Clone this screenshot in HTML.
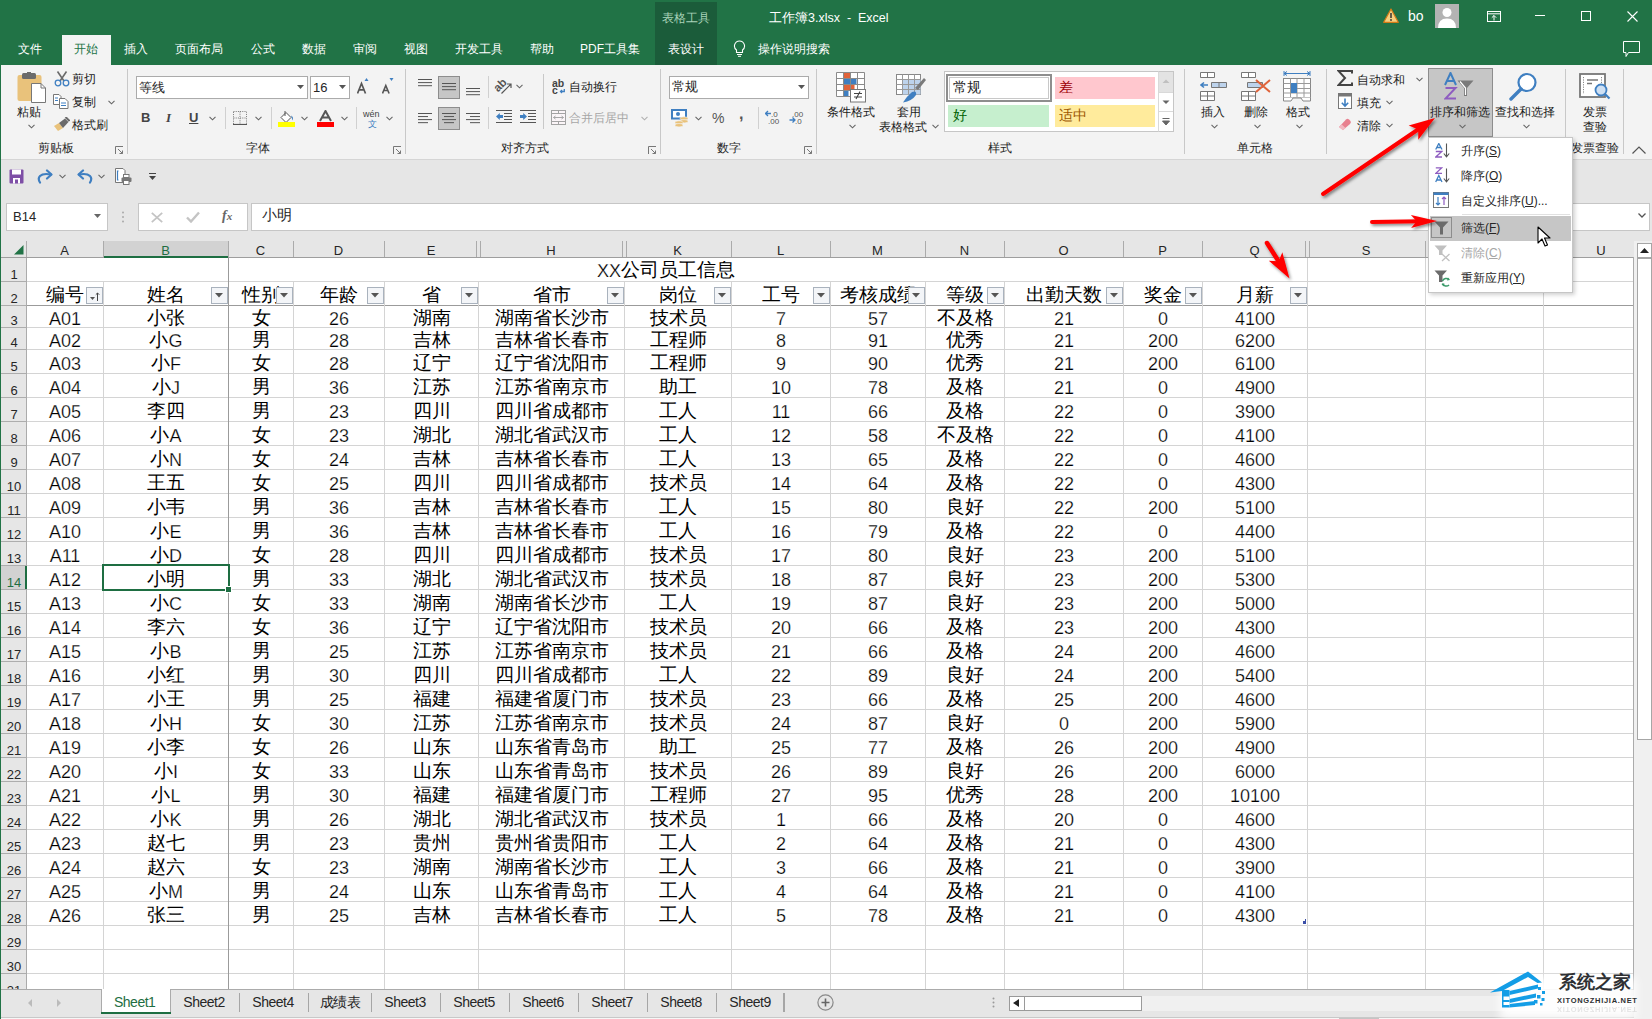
<!DOCTYPE html><html><head><meta charset="utf-8"><style>
*{margin:0;padding:0;box-sizing:border-box}
html,body{width:1652px;height:1019px;overflow:hidden;background:#fff;font-family:"Liberation Sans",sans-serif;}
div,svg{position:absolute}
.t{white-space:nowrap;line-height:14px;font-size:12px;color:#262626}
.g{white-space:nowrap;font-size:18px;line-height:20px;color:#000;text-align:center;overflow:hidden;-webkit-text-stroke:0.25px #fff}
.c{font-size:18.7px;position:relative;top:-1px;-webkit-text-stroke:0}
</style></head><body><div style="left:0px;top:0px;width:1652px;height:65px;background:#217346"></div>
<div style="left:655px;top:2px;width:62px;height:63px;background:#1b5c3a"></div>
<div class="t" style="left:586.0px;top:11px;width:200px;text-align:center;color:#a9d3b9;font-size:12px">表格工具</div>
<div class="t" style="left:769px;top:11px;color:#fff;font-size:12.5px">工作簿3.xlsx&nbsp; - &nbsp;Excel</div>
<div style="left:62px;top:35px;width:49px;height:30px;background:#f3f3f3"></div>
<div class="t" style="left:-70.0px;top:42px;width:200px;text-align:center;color:#fff;font-size:12px">文件</div>
<div class="t" style="left:-14.0px;top:42px;width:200px;text-align:center;color:#217346;font-size:12px">开始</div>
<div class="t" style="left:36.0px;top:42px;width:200px;text-align:center;color:#fff;font-size:12px">插入</div>
<div class="t" style="left:99.0px;top:42px;width:200px;text-align:center;color:#fff;font-size:12px">页面布局</div>
<div class="t" style="left:163.0px;top:42px;width:200px;text-align:center;color:#fff;font-size:12px">公式</div>
<div class="t" style="left:214.0px;top:42px;width:200px;text-align:center;color:#fff;font-size:12px">数据</div>
<div class="t" style="left:265.0px;top:42px;width:200px;text-align:center;color:#fff;font-size:12px">审阅</div>
<div class="t" style="left:316.0px;top:42px;width:200px;text-align:center;color:#fff;font-size:12px">视图</div>
<div class="t" style="left:379.0px;top:42px;width:200px;text-align:center;color:#fff;font-size:12px">开发工具</div>
<div class="t" style="left:442.0px;top:42px;width:200px;text-align:center;color:#fff;font-size:12px">帮助</div>
<div class="t" style="left:510.0px;top:42px;width:200px;text-align:center;color:#fff;font-size:12px">PDF工具集</div>
<div class="t" style="left:586.0px;top:42px;width:200px;text-align:center;color:#fff;font-size:12px">表设计</div>
<div class="t" style="left:758px;top:42px;color:#fff;font-size:12px">操作说明搜索</div>
<div style="left:1px;top:65px;width:1651px;height:95px;background:#f3f3f3;border-bottom:1px solid #d5d5d5"></div>
<svg style="left:17px;top:72px;" width="30" height="32" viewBox="0 0 30 32"><rect x="0.5" y="3" width="24" height="26" rx="2" fill="#e9c27b"/><rect x="5" y="1" width="14" height="6" rx="1.5" fill="#6b6b6b"/><rect x="10" y="0" width="4" height="3" fill="#6b6b6b"/><path d="M14.5 11.5 H24 L28.5 16 V30.5 H14.5 Z" fill="#fff" stroke="#777" stroke-width="1"/><path d="M24 11.5 V16 H28.5" fill="none" stroke="#777" stroke-width="1"/></svg>
<div class="t" style="left:17px;top:105px;font-size:12px;color:#1a1a1a">粘贴</div>
<svg style="left:28px;top:124px;" width="7" height="5" viewBox="0 0 7 5"><path d="M0.5 0.8 L3.5 3.8 L6.5 0.8" stroke="#666" stroke-width="1.1" fill="none"/></svg>
<svg style="left:54px;top:71px;" width="16" height="16" viewBox="0 0 16 16"><path d="M3.5 0.5 L10 10 M12.5 0.5 L6 10" stroke="#6b6b6b" stroke-width="1.6"/><circle cx="4" cy="12" r="2.8" fill="none" stroke="#3f7fc1" stroke-width="1.3"/><circle cx="12" cy="12" r="2.8" fill="none" stroke="#3f7fc1" stroke-width="1.3"/></svg>
<div class="t" style="left:72px;top:72px;font-size:12px;color:#1a1a1a">剪切</div>
<svg style="left:53px;top:94px;" width="16" height="15" viewBox="0 0 16 15"><path d="M0.5 0.5 H6 L8 2.5 V10.5 H0.5 Z" fill="#fff" stroke="#777"/><path d="M6.5 4.5 H12 L15 7.5 V14.5 H6.5 Z" fill="#fff" stroke="#777"/><path d="M2 4 H5 M2 6.5 H5 M8 9 H13 M8 11.5 H13" stroke="#3f7fc1" stroke-width="1"/></svg>
<div class="t" style="left:72px;top:95px;font-size:12px;color:#1a1a1a">复制</div>
<svg style="left:108px;top:100px;" width="7" height="5" viewBox="0 0 7 5"><path d="M0.5 0.8 L3.5 3.8 L6.5 0.8" stroke="#666" stroke-width="1.1" fill="none"/></svg>
<svg style="left:53px;top:117px;" width="17" height="15" viewBox="0 0 17 15"><path d="M1 9 L6 6 L10 11 L5 14 Z" fill="#e9c27b"/><path d="M6 6 L12 1.5 L15.5 5 L10 11 Z" fill="#6b6b6b"/><path d="M12.5 0 L16.5 4" stroke="#6b6b6b" stroke-width="2"/></svg>
<div class="t" style="left:72px;top:118px;font-size:12px;color:#1a1a1a">格式刷</div>
<div class="t" style="left:-44.0px;top:141px;width:200px;text-align:center;font-size:12px;color:#262626">剪贴板</div>
<svg style="left:115px;top:146px;" width="9" height="9" viewBox="0 0 9 9"><path d="M0.5 8 V0.5 H8" stroke="#777" stroke-width="1" fill="none"/><path d="M3 3 L7.5 7.5 M4.5 7.5 H7.5 V4.5" stroke="#777" stroke-width="1" fill="none"/></svg>
<div style="left:127px;top:69px;width:1px;height:85px;background:#c8c8c8"></div>
<div style="left:136px;top:76px;width:172px;height:23px;background:#fff;border:1px solid #ababab"></div>
<div class="t" style="left:139px;top:81px;font-size:13px;color:#262626">等线</div>
<svg style="left:297px;top:85px;" width="7" height="4" viewBox="0 0 7 4"><path d="M0 0 H7 L3.5 4 Z" fill="#555"/></svg>
<div style="left:310px;top:76px;width:40px;height:23px;background:#fff;border:1px solid #ababab"></div>
<div class="t" style="left:313px;top:81px;font-size:13px;color:#262626">16</div>
<svg style="left:339px;top:85px;" width="7" height="4" viewBox="0 0 7 4"><path d="M0 0 H7 L3.5 4 Z" fill="#555"/></svg>
<svg style="left:357px;top:77px;" width="12" height="17" viewBox="0 0 12 17"><path d="M0.5 16.5 L4.5 6.5 L8.5 16.5 M2 12.8 H7" stroke="#555" stroke-width="1.7" fill="none"/><path d="M7.5 4 L9.5 1 L11.5 4 Z" fill="#3f7fc1"/></svg>
<svg style="left:382px;top:77px;" width="12" height="17" viewBox="0 0 12 17"><path d="M0.5 16.5 L3.8 8.5 L7.1 16.5 M1.8 13.5 H5.8" stroke="#555" stroke-width="1.6" fill="none"/><path d="M7.5 1 H11.5 L9.5 4 Z" fill="#3f7fc1"/></svg>
<div class="t" style="left:141px;top:110px;font-size:13px;line-height:16px;font-weight:bold;color:#444">B</div>
<div class="t" style="left:166px;top:110px;font-size:13px;line-height:16px;font-style:italic;font-family:'Liberation Serif',serif;font-weight:bold;color:#444">I</div>
<div class="t" style="left:189px;top:110px;font-size:13px;line-height:16px;font-weight:bold;color:#444;text-decoration:underline">U</div>
<svg style="left:209px;top:116px;" width="7" height="5" viewBox="0 0 7 5"><path d="M0.5 0.8 L3.5 3.8 L6.5 0.8" stroke="#666" stroke-width="1.1" fill="none"/></svg>
<div style="left:225px;top:107px;width:1px;height:22px;background:#d0d0d0"></div>
<svg style="left:233px;top:111px;" width="14" height="14" viewBox="0 0 14 14"><path d="M0.5 0.5 H13.5 V13.5 H0.5 Z M7 0.5 V13.5 M0.5 7 H13.5" stroke="#777" stroke-width="1" stroke-dasharray="1 1.2" fill="none"/><path d="M0 13.5 H14" stroke="#555" stroke-width="1.2"/></svg>
<svg style="left:255px;top:116px;" width="7" height="5" viewBox="0 0 7 5"><path d="M0.5 0.8 L3.5 3.8 L6.5 0.8" stroke="#666" stroke-width="1.1" fill="none"/></svg>
<div style="left:271px;top:107px;width:1px;height:22px;background:#d0d0d0"></div>
<svg style="left:278px;top:110px;" width="17" height="17" viewBox="0 0 17 17"><path d="M3 7.5 L8 2.5 L13 7.5 L8 12.5 Z" fill="#fff" stroke="#555" stroke-width="1"/><path d="M7 1 V6" stroke="#555"/><path d="M13 5.5 Q16 7 14.5 10.5 Z" fill="#3f7fc1"/><rect x="0" y="12" width="17" height="5" fill="#ffff00"/></svg>
<svg style="left:301px;top:116px;" width="7" height="5" viewBox="0 0 7 5"><path d="M0.5 0.8 L3.5 3.8 L6.5 0.8" stroke="#666" stroke-width="1.1" fill="none"/></svg>
<svg style="left:317px;top:110px;" width="17" height="17" viewBox="0 0 17 17"><path d="M3 11 L8.5 1 L14 11 M5 7.5 H12" stroke="#555" stroke-width="2" fill="none"/><rect x="0" y="12" width="17" height="5" fill="#ff0000"/></svg>
<svg style="left:341px;top:116px;" width="7" height="5" viewBox="0 0 7 5"><path d="M0.5 0.8 L3.5 3.8 L6.5 0.8" stroke="#666" stroke-width="1.1" fill="none"/></svg>
<div style="left:356px;top:107px;width:1px;height:22px;background:#d0d0d0"></div>
<div class="t" style="left:363px;top:109px;font-size:9px;line-height:10px;color:#444">wén</div>
<div class="t" style="left:368px;top:119px;font-size:9px;line-height:10px;color:#3f7fc1">文</div>
<svg style="left:386px;top:116px;" width="7" height="5" viewBox="0 0 7 5"><path d="M0.5 0.8 L3.5 3.8 L6.5 0.8" stroke="#666" stroke-width="1.1" fill="none"/></svg>
<div class="t" style="left:158.0px;top:141px;width:200px;text-align:center;font-size:12px;color:#262626">字体</div>
<svg style="left:393px;top:146px;" width="9" height="9" viewBox="0 0 9 9"><path d="M0.5 8 V0.5 H8" stroke="#777" stroke-width="1" fill="none"/><path d="M3 3 L7.5 7.5 M4.5 7.5 H7.5 V4.5" stroke="#777" stroke-width="1" fill="none"/></svg>
<div style="left:405px;top:69px;width:1px;height:85px;background:#c8c8c8"></div>
<svg style="left:418px;top:79px;" width="15" height="11" viewBox="0 0 15 11"><rect x="0" y="0.0" width="14" height="1" fill="#555"/><rect x="0" y="3.0999999999999943" width="14" height="1" fill="#555"/><rect x="0" y="6.200000000000003" width="14" height="1" fill="#555"/></svg>
<div style="left:438px;top:76px;width:22px;height:23px;background:#c6c6c6;border:1px solid #8d8d8d"></div>
<svg style="left:442px;top:83px;" width="15" height="11" viewBox="0 0 15 11"><rect x="0" y="0.0" width="14" height="1" fill="#555"/><rect x="0" y="3.0999999999999943" width="14" height="1" fill="#555"/><rect x="0" y="6.200000000000003" width="14" height="1" fill="#555"/></svg>
<svg style="left:466px;top:88px;" width="15" height="11" viewBox="0 0 15 11"><rect x="0" y="0.0" width="14" height="1" fill="#555"/><rect x="0" y="3.0999999999999943" width="14" height="1" fill="#555"/><rect x="0" y="6.200000000000003" width="14" height="1" fill="#555"/></svg>
<div style="left:488px;top:76px;width:1px;height:22px;background:#d0d0d0"></div>
<svg style="left:494px;top:78px;" width="20" height="17" viewBox="0 0 20 17"><text x="0" y="0" font-size="11.5" font-family="Liberation Sans" font-weight="bold" fill="#555" transform="translate(4,14.5) rotate(-45)">ab</text><path d="M7.5 15.5 L16.5 6.5 M13 6 H17 V10" stroke="#555" stroke-width="1.2" fill="none"/></svg>
<svg style="left:516px;top:84px;" width="7" height="5" viewBox="0 0 7 5"><path d="M0.5 0.8 L3.5 3.8 L6.5 0.8" stroke="#666" stroke-width="1.1" fill="none"/></svg>
<svg style="left:418px;top:113px;" width="15" height="14" viewBox="0 0 15 14"><rect x="0" y="0.0" width="14" height="1" fill="#555"/><rect x="0" y="3.049999999999997" width="10" height="1" fill="#555"/><rect x="0" y="6.099999999999994" width="14" height="1" fill="#555"/><rect x="0" y="9.150000000000006" width="10" height="1" fill="#555"/></svg>
<div style="left:438px;top:107px;width:22px;height:23px;background:#c6c6c6;border:1px solid #8d8d8d"></div>
<svg style="left:442px;top:113px;" width="15" height="14" viewBox="0 0 15 14"><rect x="0.0" y="0.0" width="14" height="1" fill="#555"/><rect x="2.0" y="3.049999999999997" width="10" height="1" fill="#555"/><rect x="0.0" y="6.099999999999994" width="14" height="1" fill="#555"/><rect x="2.0" y="9.150000000000006" width="10" height="1" fill="#555"/></svg>
<svg style="left:466px;top:113px;" width="15" height="14" viewBox="0 0 15 14"><rect x="0" y="0.0" width="14" height="1" fill="#555"/><rect x="4" y="3.049999999999997" width="10" height="1" fill="#555"/><rect x="0" y="6.099999999999994" width="14" height="1" fill="#555"/><rect x="4" y="9.150000000000006" width="10" height="1" fill="#555"/></svg>
<div style="left:488px;top:107px;width:1px;height:22px;background:#d0d0d0"></div>
<svg style="left:496px;top:110px;" width="17" height="14" viewBox="0 0 17 14"><path d="M0 0.5 H16 M8 3.5 H16 M8 6.5 H16 M8 9.5 H16 M0 12.5 H16" stroke="#555" stroke-width="1"/><path d="M0 6.5 L3.8 3 V5 H7 V8 H3.8 V10 Z" fill="#3f7fc1"/></svg>
<svg style="left:520px;top:110px;" width="17" height="14" viewBox="0 0 17 14"><path d="M0 0.5 H16 M8 3.5 H16 M8 6.5 H16 M8 9.5 H16 M0 12.5 H16" stroke="#555" stroke-width="1"/><path d="M7 6.5 L3.2 3 V5 H0 V8 H3.2 V10 Z" fill="#3f7fc1"/></svg>
<div style="left:543px;top:74px;width:1px;height:55px;background:#c8c8c8"></div>
<svg style="left:552px;top:78px;" width="15" height="17" viewBox="0 0 15 17"><text x="0" y="8.5" font-size="10.5" font-family="Liberation Sans" font-weight="bold" fill="#444">ab</text><text x="0" y="16" font-size="10.5" font-family="Liberation Sans" font-weight="bold" fill="#444">c</text><path d="M12.3 11 V13.5 H8.5 M10 12 L8.5 13.5 L10 15" stroke="#3f7fc1" stroke-width="1.3" fill="none"/></svg>
<div class="t" style="left:569px;top:80px;font-size:12px;color:#1a1a1a">自动换行</div>
<svg style="left:551px;top:110px;" width="16" height="15" viewBox="0 0 16 15"><rect x="0.5" y="0.5" width="14" height="14" fill="#fbf5f8" stroke="#a3a3a3"/><path d="M0.5 3.5 H14.5 M0.5 11.5 H14.5 M7.5 0.5 V3.5 M7.5 11.5 V14.5" stroke="#a3a3a3"/><path d="M2.5 7.5 H12.5 M4.5 6 L2.5 7.5 L4.5 9 M10.5 6 L12.5 7.5 L10.5 9" stroke="#a8a8a8" fill="none"/></svg>
<div class="t" style="left:569px;top:111px;font-size:12px;color:#a6a6a6">合并后居中</div>
<svg style="left:641px;top:116px;" width="7" height="5" viewBox="0 0 7 5"><path d="M0.5 0.8 L3.5 3.8 L6.5 0.8" stroke="#b0b0b0" stroke-width="1.1" fill="none"/></svg>
<div class="t" style="left:425.0px;top:141px;width:200px;text-align:center;font-size:12px;color:#262626">对齐方式</div>
<svg style="left:648px;top:146px;" width="9" height="9" viewBox="0 0 9 9"><path d="M0.5 8 V0.5 H8" stroke="#777" stroke-width="1" fill="none"/><path d="M3 3 L7.5 7.5 M4.5 7.5 H7.5 V4.5" stroke="#777" stroke-width="1" fill="none"/></svg>
<div style="left:660px;top:69px;width:1px;height:85px;background:#c8c8c8"></div>
<div style="left:669px;top:76px;width:140px;height:23px;background:#fff;border:1px solid #ababab"></div>
<div class="t" style="left:672px;top:80px;font-size:13px;color:#262626">常规</div>
<svg style="left:798px;top:85px;" width="7" height="4" viewBox="0 0 7 4"><path d="M0 0 H7 L3.5 4 Z" fill="#555"/></svg>
<svg style="left:671px;top:109px;" width="18" height="18" viewBox="0 0 18 18"><rect x="1" y="1" width="14" height="8.5" fill="#fff" stroke="#3f7fc1" stroke-width="2"/><circle cx="7" cy="5" r="2" fill="#3f7fc1"/><ellipse cx="13" cy="9.5" rx="4" ry="1.7" fill="#e9c27b" stroke="#f3f3f3" stroke-width="0.6"/><ellipse cx="13" cy="12.3" rx="4" ry="1.7" fill="#e9c27b" stroke="#f3f3f3" stroke-width="0.6"/><ellipse cx="8" cy="13.5" rx="4" ry="1.7" fill="#e9c27b" stroke="#f3f3f3" stroke-width="0.6"/><ellipse cx="8" cy="16.2" rx="4" ry="1.7" fill="#e9c27b" stroke="#f3f3f3" stroke-width="0.6"/></svg>
<svg style="left:695px;top:116px;" width="7" height="5" viewBox="0 0 7 5"><path d="M0.5 0.8 L3.5 3.8 L6.5 0.8" stroke="#666" stroke-width="1.1" fill="none"/></svg>
<div class="t" style="left:712px;top:110px;font-size:14px;line-height:16px;color:#555">%</div>
<div class="t" style="left:739px;top:106px;font-size:16px;line-height:16px;font-weight:bold;color:#555">,</div>
<div style="left:758px;top:107px;width:1px;height:22px;background:#d0d0d0"></div>
<svg style="left:765px;top:110px;" width="16" height="14" viewBox="0 0 16 14"><text x="6" y="6.5" font-size="8" font-family="Liberation Sans" fill="#555">.0</text><text x="3" y="13.5" font-size="8" font-family="Liberation Sans" fill="#555">.00</text><path d="M0.5 3.5 H6 M3 1 L0.5 3.5 L3 6" stroke="#3f7fc1" stroke-width="1.3" fill="none"/></svg>
<svg style="left:789px;top:110px;" width="16" height="14" viewBox="0 0 16 14"><text x="3" y="6.5" font-size="8" font-family="Liberation Sans" fill="#555">.00</text><text x="6" y="13.5" font-size="8" font-family="Liberation Sans" fill="#555">.0</text><path d="M0.5 10 H6 M3.5 7.5 L6 10 L3.5 12.5" stroke="#3f7fc1" stroke-width="1.3" fill="none"/></svg>
<div class="t" style="left:629.0px;top:141px;width:200px;text-align:center;font-size:12px;color:#262626">数字</div>
<svg style="left:804px;top:146px;" width="9" height="9" viewBox="0 0 9 9"><path d="M0.5 8 V0.5 H8" stroke="#777" stroke-width="1" fill="none"/><path d="M3 3 L7.5 7.5 M4.5 7.5 H7.5 V4.5" stroke="#777" stroke-width="1" fill="none"/></svg>
<div style="left:816px;top:69px;width:1px;height:85px;background:#c8c8c8"></div>
<svg style="left:836px;top:72px;" width="31" height="31" viewBox="0 0 31 31"><rect x="0.5" y="0.5" width="28" height="24" fill="#fff"/><rect x="7.5" y="0.5" width="7" height="6" fill="#e0633a"/><rect x="7.5" y="6.5" width="13" height="6" fill="#3f7fc1"/><rect x="7.5" y="12.5" width="11" height="6" fill="#e0633a"/><rect x="7.5" y="18.5" width="5" height="6" fill="#3f7fc1"/><path d="M0.5 0.5 H28.5 V24.5 H0.5 Z M7.5 0.5 V24.5 M14.5 0.5 V24.5 M21.5 0.5 V24.5 M0.5 6.5 H28.5 M0.5 12.5 H28.5 M0.5 18.5 H28.5" stroke="#8a8a8a" stroke-width="1" fill="none"/><rect x="14.5" y="17.5" width="15" height="12.5" fill="#fff" stroke="#777"/><path d="M18 21.5 H26 M18 25 H26 M24 19.5 L20 27" stroke="#444" stroke-width="1.1"/></svg>
<div class="t" style="left:751.0px;top:105px;width:200px;text-align:center;font-size:12px;color:#1a1a1a">条件格式</div>
<svg style="left:849px;top:124px;" width="7" height="5" viewBox="0 0 7 5"><path d="M0.5 0.8 L3.5 3.8 L6.5 0.8" stroke="#666" stroke-width="1.1" fill="none"/></svg>
<svg style="left:896px;top:74px;" width="31" height="30" viewBox="0 0 31 30"><rect x="0.5" y="0.5" width="24" height="20" fill="#fff" stroke="#888"/><rect x="6.5" y="5.5" width="18" height="15" fill="#bdd3ec"/><path d="M6.5 0.5 V20.5 M12.5 0.5 V20.5 M18.5 0.5 V20.5 M0.5 5.5 H24.5 M0.5 10.5 H24.5 M0.5 15.5 H24.5" stroke="#999"/><path d="M30 6 L22 16 L19 14 L28 4 Z" fill="#7a7a7a"/><path d="M7 28.5 Q11 22 16 18 Q21 16 20 21 Q16 27 7 28.5 Z" fill="#3f7fc1"/></svg>
<div class="t" style="left:809.0px;top:105px;width:200px;text-align:center;font-size:12px;color:#1a1a1a">套用</div>
<div class="t" style="left:803.0px;top:120px;width:200px;text-align:center;font-size:12px;color:#1a1a1a">表格格式</div>
<svg style="left:932px;top:124px;" width="7" height="5" viewBox="0 0 7 5"><path d="M0.5 0.8 L3.5 3.8 L6.5 0.8" stroke="#666" stroke-width="1.1" fill="none"/></svg>
<div style="left:944px;top:71px;width:230px;height:61px;background:#fff;border:1px solid #c6c6c6"></div>
<div style="left:946px;top:74px;width:106px;height:28px;background:#fff;border:2px solid #8e8e8e;box-shadow:inset 0 0 0 1px #fff, inset 0 0 0 2px #c8c8c8"></div>
<div class="t" style="left:953px;top:79px;font-size:14px;line-height:16px;color:#262626">常规</div>
<div style="left:1055px;top:77px;width:100px;height:22px;background:#ffc7ce"></div>
<div class="t" style="left:1059px;top:79px;font-size:14px;line-height:16px;color:#9c0006">差</div>
<div style="left:948px;top:105px;width:101px;height:22px;background:#c6efce"></div>
<div class="t" style="left:953px;top:107px;font-size:14px;line-height:16px;color:#006100">好</div>
<div style="left:1055px;top:105px;width:100px;height:22px;background:#ffeb9c"></div>
<div class="t" style="left:1059px;top:107px;font-size:14px;line-height:16px;color:#9c5700">适中</div>
<div style="left:1158px;top:71px;width:16px;height:61px;background:#fff;border:1px solid #c6c6c6;border-left:1px solid #d9d9d9"></div>
<div style="left:1159px;top:72px;width:14px;height:20px;background:#e3e3e3"></div>
<svg style="left:1162px;top:79px;" width="8" height="5" viewBox="0 0 8 5"><path d="M0.5 4 L4 0.5 L7.5 4 Z" fill="#c0c0c0"/></svg>
<div style="left:1159px;top:92px;width:14px;height:1px;background:#d9d9d9"></div>
<svg style="left:1162px;top:100px;" width="8" height="5" viewBox="0 0 8 5"><path d="M0.5 0.5 H7.5 L4 4 Z" fill="#666"/></svg>
<div style="left:1159px;top:111px;width:14px;height:1px;background:#d9d9d9"></div>
<svg style="left:1162px;top:118px;" width="8" height="8" viewBox="0 0 8 8"><path d="M0.5 0.5 H7.5 M0.5 3 H7.5 L4 7 Z" stroke="#666" stroke-width="1" fill="#666"/></svg>
<div class="t" style="left:900.0px;top:141px;width:200px;text-align:center;font-size:12px;color:#262626">样式</div>
<div style="left:1184px;top:69px;width:1px;height:85px;background:#c8c8c8"></div>
<svg style="left:1200px;top:72px;" width="28" height="29" viewBox="0 0 28 29"><path d="M0.5 0.5 H14.5 V5.5 H0.5 Z M7.5 0.5 V5.5" stroke="#777" fill="#fff"/><path d="M11.5 10.5 H26.5 V15.5 H11.5 Z M19 10.5 V15.5" stroke="#777" fill="#bdd3ec"/><path d="M1 13 H8 M4 10.5 L1 13 L4 15.5" stroke="#3f7fc1" stroke-width="1.6" fill="none"/><path d="M0.5 19.5 H14.5 V28.5 H0.5 Z M7.5 19.5 V28.5 M0.5 24 H14.5" stroke="#777" fill="#fff"/></svg>
<div class="t" style="left:1113.0px;top:105px;width:200px;text-align:center;font-size:12px;color:#1a1a1a">插入</div>
<svg style="left:1211px;top:124px;" width="7" height="5" viewBox="0 0 7 5"><path d="M0.5 0.8 L3.5 3.8 L6.5 0.8" stroke="#666" stroke-width="1.1" fill="none"/></svg>
<svg style="left:1241px;top:72px;" width="31" height="29" viewBox="0 0 31 29"><path d="M0.5 0.5 H14.5 V5.5 H0.5 Z M7.5 0.5 V5.5" stroke="#777" fill="#fff"/><path d="M6.5 10.5 H21.5 V15.5 H6.5 Z" stroke="#777" fill="#bdd3ec"/><path d="M0.5 19.5 H14.5 V28.5 H0.5 Z M7.5 19.5 V28.5 M0.5 24 H14.5" stroke="#777" fill="#fff"/><path d="M15 8 L29 20 M29 8 L15 20" stroke="#e0633a" stroke-width="2"/></svg>
<div class="t" style="left:1156.0px;top:105px;width:200px;text-align:center;font-size:12px;color:#1a1a1a">删除</div>
<svg style="left:1254px;top:124px;" width="7" height="5" viewBox="0 0 7 5"><path d="M0.5 0.8 L3.5 3.8 L6.5 0.8" stroke="#666" stroke-width="1.1" fill="none"/></svg>
<svg style="left:1283px;top:71px;" width="29" height="31" viewBox="0 0 29 31"><path d="M1 2.5 H27 M1 0 V5 M27 0 V5 M4 0.5 L1 2.5 L4 4.5 M24 0.5 L27 2.5 L24 4.5" stroke="#3f7fc1" stroke-width="1" fill="none"/><rect x="0.5" y="7.5" width="27" height="19" fill="#fff" stroke="#888"/><path d="M7.5 7.5 V26.5 M14 7.5 V26.5 M21 7.5 V26.5 M0.5 12.5 H27.5 M0.5 17.5 H27.5 M0.5 22 H27.5" stroke="#999"/><rect x="8" y="12" width="6" height="10" fill="#3f7fc1"/><path d="M0.5 26.5 V30 H8 L10 27 H18 L20 30 H27.5 V26.5" stroke="#888" fill="#fff"/></svg>
<div class="t" style="left:1198.0px;top:105px;width:200px;text-align:center;font-size:12px;color:#1a1a1a">格式</div>
<svg style="left:1296px;top:124px;" width="7" height="5" viewBox="0 0 7 5"><path d="M0.5 0.8 L3.5 3.8 L6.5 0.8" stroke="#666" stroke-width="1.1" fill="none"/></svg>
<div class="t" style="left:1155.0px;top:141px;width:200px;text-align:center;font-size:12px;color:#262626">单元格</div>
<div style="left:1326px;top:69px;width:1px;height:85px;background:#c8c8c8"></div>
<svg style="left:1337px;top:70px;" width="16" height="16" viewBox="0 0 16 16"><path d="M15 3.5 V1 H1.5 L8 8 L1.5 15 H15 V12.5" stroke="#444" stroke-width="2" fill="none" stroke-linejoin="miter"/></svg>
<div class="t" style="left:1357px;top:73px;font-size:12px;color:#1a1a1a">自动求和</div>
<svg style="left:1416px;top:77px;" width="7" height="5" viewBox="0 0 7 5"><path d="M0.5 0.8 L3.5 3.8 L6.5 0.8" stroke="#666" stroke-width="1.1" fill="none"/></svg>
<svg style="left:1338px;top:93px;" width="15" height="17" viewBox="0 0 15 17"><rect x="0.5" y="0.5" width="13" height="15" fill="#fff" stroke="#777"/><rect x="0.5" y="0.5" width="13" height="3" fill="#777"/><path d="M7 5.5 V13 M3.8 9.8 L7 13 L10.2 9.8" stroke="#3f7fc1" stroke-width="1.6" fill="none"/></svg>
<div class="t" style="left:1357px;top:96px;font-size:12px;color:#1a1a1a">填充</div>
<svg style="left:1386px;top:100px;" width="7" height="5" viewBox="0 0 7 5"><path d="M0.5 0.8 L3.5 3.8 L6.5 0.8" stroke="#666" stroke-width="1.1" fill="none"/></svg>
<svg style="left:1338px;top:117px;" width="14" height="14" viewBox="0 0 14 14"><path d="M1 10 L8 2.5 Q9.5 1 11 2.5 L12.5 4 Q13.5 5.5 12 7 L5 13 Z" fill="#e8808f"/><path d="M1 10 L3.5 7.3 L7.5 11 L5 13.2 Z" fill="#f2b8c1"/></svg>
<div class="t" style="left:1357px;top:119px;font-size:12px;color:#1a1a1a">清除</div>
<svg style="left:1386px;top:123px;" width="7" height="5" viewBox="0 0 7 5"><path d="M0.5 0.8 L3.5 3.8 L6.5 0.8" stroke="#666" stroke-width="1.1" fill="none"/></svg>
<div style="left:1428px;top:68px;width:65px;height:69px;background:#c6c6c6;border:1px solid #8d8d8d"></div>
<svg style="left:1444px;top:72px;" width="14" height="29" viewBox="0 0 14 29"><path d="M1 13 L6.5 1 L12 13 M3 9 H10" stroke="#3f7fc1" stroke-width="2" fill="none"/><path d="M1.5 16 H11.5 L1.5 26.5 H12" stroke="#8e5cc0" stroke-width="2" fill="none" stroke-linejoin="miter"/></svg>
<svg style="left:1457px;top:80px;" width="17" height="17" viewBox="0 0 17 17"><path d="M0.5 0.5 H16.5 L10 8 V16 H7 V8 Z" fill="#7a7a7a"/><path d="M3 1.5 L8.5 8 V15" stroke="#fff" stroke-width="1.2" fill="none"/></svg>
<div class="t" style="left:1360.0px;top:105px;width:200px;text-align:center;font-size:12px;color:#1a1a1a">排序和筛选</div>
<svg style="left:1459px;top:124px;" width="7" height="5" viewBox="0 0 7 5"><path d="M0.5 0.8 L3.5 3.8 L6.5 0.8" stroke="#666" stroke-width="1.1" fill="none"/></svg>
<svg style="left:1509px;top:72px;" width="29" height="29" viewBox="0 0 29 29"><circle cx="18" cy="10.5" r="8.5" fill="#fff" stroke="#3f7fc1" stroke-width="2.2"/><path d="M12 17 L2 27" stroke="#3f7fc1" stroke-width="3.4" stroke-linecap="round"/></svg>
<div class="t" style="left:1425.0px;top:105px;width:200px;text-align:center;font-size:12px;color:#1a1a1a">查找和选择</div>
<svg style="left:1523px;top:124px;" width="7" height="5" viewBox="0 0 7 5"><path d="M0.5 0.8 L3.5 3.8 L6.5 0.8" stroke="#666" stroke-width="1.1" fill="none"/></svg>
<div style="left:1565px;top:69px;width:1px;height:85px;background:#c8c8c8"></div>
<svg style="left:1579px;top:73px;" width="32" height="28" viewBox="0 0 32 28"><rect x="1" y="1" width="25" height="23" fill="#fff" stroke="#777" stroke-width="1.8"/><path d="M4.5 4 V21 M22.5 4 V21" stroke="#888" stroke-dasharray="1.2 1.2"/><path d="M8 7 H19 M8 10.5 H13" stroke="#777" stroke-width="1.6"/><circle cx="22" cy="17" r="5.5" fill="#cfe0f3" stroke="#3f7fc1" stroke-width="1.8"/><path d="M26 21 L30.5 25.5" stroke="#3f7fc1" stroke-width="2.2"/></svg>
<div class="t" style="left:1495.0px;top:105px;width:200px;text-align:center;font-size:12px;color:#1a1a1a">发票</div>
<div class="t" style="left:1495.0px;top:120px;width:200px;text-align:center;font-size:12px;color:#1a1a1a">查验</div>
<div class="t" style="left:1495.0px;top:141px;width:200px;text-align:center;font-size:12px;color:#262626">发票查验</div>
<div style="left:1623px;top:69px;width:1px;height:85px;background:#c8c8c8"></div>
<svg style="left:1632px;top:146px;" width="14" height="8" viewBox="0 0 14 8"><path d="M0.5 7.5 L7 1 L13.5 7.5" stroke="#555" stroke-width="1.2" fill="none"/></svg>
<div style="left:1px;top:160px;width:1651px;height:81px;background:#e6e6e6"></div>
<div style="left:6px;top:203px;width:102px;height:28px;background:#fff;border:1px solid #c6c6c6"></div>
<div class="t" style="left:13px;top:210px;font-size:13px;color:#262626">B14</div>
<div style="left:138px;top:203px;width:110px;height:28px;background:#fff;border:1px solid #c6c6c6"></div>
<div style="left:251px;top:203px;width:1399px;height:28px;background:#fff;border:1px solid #c6c6c6"></div>
<div class="t" style="left:262px;top:207px;font-size:14.5px;line-height:16px;color:#262626">小明</div>
<div style="left:1px;top:241px;width:1636px;height:748px;background:#fff"></div>
<div style="left:1px;top:241px;width:1633px;height:16px;background:#e6e6e6"></div>
<div style="left:1px;top:257px;width:25px;height:732px;background:#e6e6e6"></div>
<div style="left:104px;top:241px;width:124px;height:15px;background:#d2d2d2"></div>
<div style="left:1px;top:566px;width:25px;height:23px;background:#d2d2d2"></div>
<div style="left:27px;top:281px;width:1606px;height:1px;background:#d4d4d4"></div>
<div style="left:1px;top:281px;width:25px;height:1px;background:#adadad"></div>
<div style="left:27px;top:305px;width:1606px;height:1px;background:#9b9b9b"></div>
<div style="left:1px;top:305px;width:25px;height:1px;background:#adadad"></div>
<div style="left:27px;top:327px;width:1606px;height:1px;background:#d4d4d4"></div>
<div style="left:1px;top:327px;width:25px;height:1px;background:#adadad"></div>
<div style="left:27px;top:349px;width:1606px;height:1px;background:#d4d4d4"></div>
<div style="left:1px;top:349px;width:25px;height:1px;background:#adadad"></div>
<div style="left:27px;top:373px;width:1606px;height:1px;background:#d4d4d4"></div>
<div style="left:1px;top:373px;width:25px;height:1px;background:#adadad"></div>
<div style="left:27px;top:397px;width:1606px;height:1px;background:#d4d4d4"></div>
<div style="left:1px;top:397px;width:25px;height:1px;background:#adadad"></div>
<div style="left:27px;top:421px;width:1606px;height:1px;background:#d4d4d4"></div>
<div style="left:1px;top:421px;width:25px;height:1px;background:#adadad"></div>
<div style="left:27px;top:445px;width:1606px;height:1px;background:#d4d4d4"></div>
<div style="left:1px;top:445px;width:25px;height:1px;background:#adadad"></div>
<div style="left:27px;top:469px;width:1606px;height:1px;background:#d4d4d4"></div>
<div style="left:1px;top:469px;width:25px;height:1px;background:#adadad"></div>
<div style="left:27px;top:493px;width:1606px;height:1px;background:#d4d4d4"></div>
<div style="left:1px;top:493px;width:25px;height:1px;background:#adadad"></div>
<div style="left:27px;top:517px;width:1606px;height:1px;background:#d4d4d4"></div>
<div style="left:1px;top:517px;width:25px;height:1px;background:#adadad"></div>
<div style="left:27px;top:541px;width:1606px;height:1px;background:#d4d4d4"></div>
<div style="left:1px;top:541px;width:25px;height:1px;background:#adadad"></div>
<div style="left:27px;top:565px;width:1606px;height:1px;background:#d4d4d4"></div>
<div style="left:1px;top:565px;width:25px;height:1px;background:#adadad"></div>
<div style="left:27px;top:589px;width:1606px;height:1px;background:#d4d4d4"></div>
<div style="left:1px;top:589px;width:25px;height:1px;background:#adadad"></div>
<div style="left:27px;top:613px;width:1606px;height:1px;background:#d4d4d4"></div>
<div style="left:1px;top:613px;width:25px;height:1px;background:#adadad"></div>
<div style="left:27px;top:637px;width:1606px;height:1px;background:#d4d4d4"></div>
<div style="left:1px;top:637px;width:25px;height:1px;background:#adadad"></div>
<div style="left:27px;top:661px;width:1606px;height:1px;background:#d4d4d4"></div>
<div style="left:1px;top:661px;width:25px;height:1px;background:#adadad"></div>
<div style="left:27px;top:685px;width:1606px;height:1px;background:#d4d4d4"></div>
<div style="left:1px;top:685px;width:25px;height:1px;background:#adadad"></div>
<div style="left:27px;top:709px;width:1606px;height:1px;background:#d4d4d4"></div>
<div style="left:1px;top:709px;width:25px;height:1px;background:#adadad"></div>
<div style="left:27px;top:733px;width:1606px;height:1px;background:#d4d4d4"></div>
<div style="left:1px;top:733px;width:25px;height:1px;background:#adadad"></div>
<div style="left:27px;top:757px;width:1606px;height:1px;background:#d4d4d4"></div>
<div style="left:1px;top:757px;width:25px;height:1px;background:#adadad"></div>
<div style="left:27px;top:781px;width:1606px;height:1px;background:#d4d4d4"></div>
<div style="left:1px;top:781px;width:25px;height:1px;background:#adadad"></div>
<div style="left:27px;top:805px;width:1606px;height:1px;background:#d4d4d4"></div>
<div style="left:1px;top:805px;width:25px;height:1px;background:#adadad"></div>
<div style="left:27px;top:829px;width:1606px;height:1px;background:#d4d4d4"></div>
<div style="left:1px;top:829px;width:25px;height:1px;background:#adadad"></div>
<div style="left:27px;top:853px;width:1606px;height:1px;background:#d4d4d4"></div>
<div style="left:1px;top:853px;width:25px;height:1px;background:#adadad"></div>
<div style="left:27px;top:877px;width:1606px;height:1px;background:#d4d4d4"></div>
<div style="left:1px;top:877px;width:25px;height:1px;background:#adadad"></div>
<div style="left:27px;top:901px;width:1606px;height:1px;background:#d4d4d4"></div>
<div style="left:1px;top:901px;width:25px;height:1px;background:#adadad"></div>
<div style="left:27px;top:925px;width:1606px;height:1px;background:#d4d4d4"></div>
<div style="left:1px;top:925px;width:25px;height:1px;background:#adadad"></div>
<div style="left:27px;top:949px;width:1606px;height:1px;background:#d4d4d4"></div>
<div style="left:1px;top:949px;width:25px;height:1px;background:#adadad"></div>
<div style="left:27px;top:973px;width:1606px;height:1px;background:#d4d4d4"></div>
<div style="left:1px;top:973px;width:25px;height:1px;background:#adadad"></div>
<div style="left:103px;top:282px;width:1px;height:707px;background:#d4d4d4"></div>
<div style="left:228px;top:258px;width:1px;height:731px;background:#9b9b9b"></div>
<div style="left:293px;top:282px;width:1px;height:707px;background:#d4d4d4"></div>
<div style="left:384px;top:282px;width:1px;height:707px;background:#d4d4d4"></div>
<div style="left:478px;top:282px;width:1px;height:707px;background:#d4d4d4"></div>
<div style="left:624px;top:282px;width:1px;height:707px;background:#d4d4d4"></div>
<div style="left:731px;top:282px;width:1px;height:707px;background:#d4d4d4"></div>
<div style="left:830px;top:282px;width:1px;height:707px;background:#d4d4d4"></div>
<div style="left:925px;top:282px;width:1px;height:707px;background:#d4d4d4"></div>
<div style="left:1004px;top:282px;width:1px;height:707px;background:#d4d4d4"></div>
<div style="left:1123px;top:282px;width:1px;height:707px;background:#d4d4d4"></div>
<div style="left:1202px;top:282px;width:1px;height:707px;background:#d4d4d4"></div>
<div style="left:1307px;top:258px;width:1px;height:731px;background:#d4d4d4"></div>
<div style="left:1425px;top:258px;width:1px;height:731px;background:#d4d4d4"></div>
<div style="left:1543px;top:258px;width:1px;height:731px;background:#d4d4d4"></div>
<div style="left:26px;top:241px;width:1px;height:748px;background:#ababab"></div>
<div style="left:1px;top:257px;width:1633px;height:1px;background:#9e9e9e"></div>
<div style="left:26px;top:241px;width:1px;height:16px;background:#ababab"></div>
<div style="left:103px;top:241px;width:1px;height:16px;background:#ababab"></div>
<div style="left:228px;top:241px;width:1px;height:16px;background:#ababab"></div>
<div style="left:293px;top:241px;width:1px;height:16px;background:#ababab"></div>
<div style="left:384px;top:241px;width:1px;height:16px;background:#ababab"></div>
<div style="left:476px;top:241px;width:1px;height:16px;background:#ababab"></div>
<div style="left:480px;top:241px;width:1px;height:16px;background:#ababab"></div>
<div style="left:622px;top:241px;width:1px;height:16px;background:#ababab"></div>
<div style="left:626px;top:241px;width:1px;height:16px;background:#ababab"></div>
<div style="left:731px;top:241px;width:1px;height:16px;background:#ababab"></div>
<div style="left:830px;top:241px;width:1px;height:16px;background:#ababab"></div>
<div style="left:925px;top:241px;width:1px;height:16px;background:#ababab"></div>
<div style="left:1004px;top:241px;width:1px;height:16px;background:#ababab"></div>
<div style="left:1123px;top:241px;width:1px;height:16px;background:#ababab"></div>
<div style="left:1202px;top:241px;width:1px;height:16px;background:#ababab"></div>
<div style="left:1305px;top:241px;width:1px;height:16px;background:#ababab"></div>
<div style="left:1309px;top:241px;width:1px;height:16px;background:#ababab"></div>
<div style="left:1425px;top:241px;width:1px;height:16px;background:#ababab"></div>
<div style="left:1543px;top:241px;width:1px;height:16px;background:#ababab"></div>
<div style="left:104px;top:256px;width:124px;height:2px;background:#1e6e42"></div>
<div style="left:25px;top:566px;width:2px;height:23px;background:#1e6e42"></div>
<div style="left:1633px;top:257px;width:1px;height:732px;background:#ababab"></div>
<svg style="left:14px;top:245px;" width="10" height="10" viewBox="0 0 10 10"><path d="M9.5 0 V9.5 H0 Z" fill="#217346"/></svg>
<div class="t" style="left:-35.5px;top:244px;width:200px;text-align:center;font-size:13px;color:#262626">A</div>
<div class="t" style="left:65.5px;top:244px;width:200px;text-align:center;font-size:13px;color:#1e6e42">B</div>
<div class="t" style="left:160.5px;top:244px;width:200px;text-align:center;font-size:13px;color:#262626">C</div>
<div class="t" style="left:238.5px;top:244px;width:200px;text-align:center;font-size:13px;color:#262626">D</div>
<div class="t" style="left:331.0px;top:244px;width:200px;text-align:center;font-size:13px;color:#262626">E</div>
<div class="t" style="left:451.0px;top:244px;width:200px;text-align:center;font-size:13px;color:#262626">H</div>
<div class="t" style="left:577.5px;top:244px;width:200px;text-align:center;font-size:13px;color:#262626">K</div>
<div class="t" style="left:680.5px;top:244px;width:200px;text-align:center;font-size:13px;color:#262626">L</div>
<div class="t" style="left:777.5px;top:244px;width:200px;text-align:center;font-size:13px;color:#262626">M</div>
<div class="t" style="left:864.5px;top:244px;width:200px;text-align:center;font-size:13px;color:#262626">N</div>
<div class="t" style="left:963.5px;top:244px;width:200px;text-align:center;font-size:13px;color:#262626">O</div>
<div class="t" style="left:1062.5px;top:244px;width:200px;text-align:center;font-size:13px;color:#262626">P</div>
<div class="t" style="left:1154.5px;top:244px;width:200px;text-align:center;font-size:13px;color:#262626">Q</div>
<div class="t" style="left:1266.0px;top:244px;width:200px;text-align:center;font-size:13px;color:#262626">S</div>
<div class="t" style="left:1384.0px;top:244px;width:200px;text-align:center;font-size:13px;color:#262626">T</div>
<div class="t" style="left:1501.0px;top:244px;width:200px;text-align:center;font-size:13px;color:#262626">U</div>
<div class="t" style="left:2px;top:267.5px;width:24px;text-align:center;font-size:13px;color:#262626">1</div>
<div class="t" style="left:2px;top:291.5px;width:24px;text-align:center;font-size:13px;color:#262626">2</div>
<div class="t" style="left:2px;top:313.5px;width:24px;text-align:center;font-size:13px;color:#262626">3</div>
<div class="t" style="left:2px;top:335.5px;width:24px;text-align:center;font-size:13px;color:#262626">4</div>
<div class="t" style="left:2px;top:359.5px;width:24px;text-align:center;font-size:13px;color:#262626">5</div>
<div class="t" style="left:2px;top:383.5px;width:24px;text-align:center;font-size:13px;color:#262626">6</div>
<div class="t" style="left:2px;top:407.5px;width:24px;text-align:center;font-size:13px;color:#262626">7</div>
<div class="t" style="left:2px;top:431.5px;width:24px;text-align:center;font-size:13px;color:#262626">8</div>
<div class="t" style="left:2px;top:455.5px;width:24px;text-align:center;font-size:13px;color:#262626">9</div>
<div class="t" style="left:2px;top:479.5px;width:24px;text-align:center;font-size:13px;color:#262626">10</div>
<div class="t" style="left:2px;top:503.5px;width:24px;text-align:center;font-size:13px;color:#262626">11</div>
<div class="t" style="left:2px;top:527.5px;width:24px;text-align:center;font-size:13px;color:#262626">12</div>
<div class="t" style="left:2px;top:551.5px;width:24px;text-align:center;font-size:13px;color:#262626">13</div>
<div class="t" style="left:2px;top:575.5px;width:24px;text-align:center;font-size:13px;color:#1e6e42">14</div>
<div class="t" style="left:2px;top:599.5px;width:24px;text-align:center;font-size:13px;color:#262626">15</div>
<div class="t" style="left:2px;top:623.5px;width:24px;text-align:center;font-size:13px;color:#262626">16</div>
<div class="t" style="left:2px;top:647.5px;width:24px;text-align:center;font-size:13px;color:#262626">17</div>
<div class="t" style="left:2px;top:671.5px;width:24px;text-align:center;font-size:13px;color:#262626">18</div>
<div class="t" style="left:2px;top:695.5px;width:24px;text-align:center;font-size:13px;color:#262626">19</div>
<div class="t" style="left:2px;top:719.5px;width:24px;text-align:center;font-size:13px;color:#262626">20</div>
<div class="t" style="left:2px;top:743.5px;width:24px;text-align:center;font-size:13px;color:#262626">21</div>
<div class="t" style="left:2px;top:767.5px;width:24px;text-align:center;font-size:13px;color:#262626">22</div>
<div class="t" style="left:2px;top:791.5px;width:24px;text-align:center;font-size:13px;color:#262626">23</div>
<div class="t" style="left:2px;top:815.5px;width:24px;text-align:center;font-size:13px;color:#262626">24</div>
<div class="t" style="left:2px;top:839.5px;width:24px;text-align:center;font-size:13px;color:#262626">25</div>
<div class="t" style="left:2px;top:863.5px;width:24px;text-align:center;font-size:13px;color:#262626">26</div>
<div class="t" style="left:2px;top:887.5px;width:24px;text-align:center;font-size:13px;color:#262626">27</div>
<div class="t" style="left:2px;top:911.5px;width:24px;text-align:center;font-size:13px;color:#262626">28</div>
<div class="t" style="left:2px;top:935.5px;width:24px;text-align:center;font-size:13px;color:#262626">29</div>
<div class="t" style="left:2px;top:959.5px;width:24px;text-align:center;font-size:13px;color:#262626">30</div>
<div style="left:1px;top:974px;width:25px;height:15px;overflow:hidden"><div class="t" style="left:1px;top:9.5px;width:24px;text-align:center;font-size:13px;color:#262626">31</div></div>
<div class="g" style="left:27px;top:261.0px;width:1278px;">XX<span class="c">公司员工信息</span></div>
<div class="g" style="left:27px;top:286.0px;width:76px;"><span class="c">编号</span></div>
<div class="g" style="left:104px;top:286.0px;width:124px;"><span class="c">姓名</span></div>
<div class="g" style="left:229px;top:286.0px;width:64px;"><span class="c">性别</span></div>
<div class="g" style="left:294px;top:286.0px;width:90px;"><span class="c">年龄</span></div>
<div class="g" style="left:385px;top:286.0px;width:93px;"><span class="c">省</span></div>
<div class="g" style="left:479px;top:286.0px;width:145px;"><span class="c">省市</span></div>
<div class="g" style="left:625px;top:286.0px;width:106px;"><span class="c">岗位</span></div>
<div class="g" style="left:732px;top:286.0px;width:98px;"><span class="c">工号</span></div>
<div class="g" style="left:831px;top:286.0px;width:94px;"><span class="c">考核成绩</span></div>
<div class="g" style="left:926px;top:286.0px;width:78px;"><span class="c">等级</span></div>
<div class="g" style="left:1005px;top:286.0px;width:118px;"><span class="c">出勤天数</span></div>
<div class="g" style="left:1124px;top:286.0px;width:78px;"><span class="c">奖金</span></div>
<div class="g" style="left:1203px;top:286.0px;width:104px;"><span class="c">月薪</span></div>
<div style="left:86px;top:287px;width:17px;height:17px;background:#f3f5f8;border:1px solid #a9b2bd"></div>
<svg style="left:90px;top:292px;" width="10" height="10" viewBox="0 0 10 10"><path d="M0 5 L5 5 L2.5 8 Z" fill="#555"/><path d="M7.5 9 V1 M5.8 2.7 L7.5 1 L9.2 2.7" stroke="#444" stroke-width="1" fill="none"/></svg>
<div style="left:211px;top:287px;width:17px;height:17px;background:#f3f5f8;border:1px solid #a9b2bd"></div>
<svg style="left:215px;top:293px;" width="8" height="5" viewBox="0 0 8 5"><path d="M0 0 L8 0 L4 4.5 Z" fill="#555"/></svg>
<div style="left:276px;top:287px;width:17px;height:17px;background:#f3f5f8;border:1px solid #a9b2bd"></div>
<svg style="left:280px;top:293px;" width="8" height="5" viewBox="0 0 8 5"><path d="M0 0 L8 0 L4 4.5 Z" fill="#555"/></svg>
<div style="left:367px;top:287px;width:17px;height:17px;background:#f3f5f8;border:1px solid #a9b2bd"></div>
<svg style="left:371px;top:293px;" width="8" height="5" viewBox="0 0 8 5"><path d="M0 0 L8 0 L4 4.5 Z" fill="#555"/></svg>
<div style="left:461px;top:287px;width:17px;height:17px;background:#f3f5f8;border:1px solid #a9b2bd"></div>
<svg style="left:465px;top:293px;" width="8" height="5" viewBox="0 0 8 5"><path d="M0 0 L8 0 L4 4.5 Z" fill="#555"/></svg>
<div style="left:607px;top:287px;width:17px;height:17px;background:#f3f5f8;border:1px solid #a9b2bd"></div>
<svg style="left:611px;top:293px;" width="8" height="5" viewBox="0 0 8 5"><path d="M0 0 L8 0 L4 4.5 Z" fill="#555"/></svg>
<div style="left:714px;top:287px;width:17px;height:17px;background:#f3f5f8;border:1px solid #a9b2bd"></div>
<svg style="left:718px;top:293px;" width="8" height="5" viewBox="0 0 8 5"><path d="M0 0 L8 0 L4 4.5 Z" fill="#555"/></svg>
<div style="left:813px;top:287px;width:17px;height:17px;background:#f3f5f8;border:1px solid #a9b2bd"></div>
<svg style="left:817px;top:293px;" width="8" height="5" viewBox="0 0 8 5"><path d="M0 0 L8 0 L4 4.5 Z" fill="#555"/></svg>
<div style="left:908px;top:287px;width:17px;height:17px;background:#f3f5f8;border:1px solid #a9b2bd"></div>
<svg style="left:912px;top:293px;" width="8" height="5" viewBox="0 0 8 5"><path d="M0 0 L8 0 L4 4.5 Z" fill="#555"/></svg>
<div style="left:987px;top:287px;width:17px;height:17px;background:#f3f5f8;border:1px solid #a9b2bd"></div>
<svg style="left:991px;top:293px;" width="8" height="5" viewBox="0 0 8 5"><path d="M0 0 L8 0 L4 4.5 Z" fill="#555"/></svg>
<div style="left:1106px;top:287px;width:17px;height:17px;background:#f3f5f8;border:1px solid #a9b2bd"></div>
<svg style="left:1110px;top:293px;" width="8" height="5" viewBox="0 0 8 5"><path d="M0 0 L8 0 L4 4.5 Z" fill="#555"/></svg>
<div style="left:1185px;top:287px;width:17px;height:17px;background:#f3f5f8;border:1px solid #a9b2bd"></div>
<svg style="left:1189px;top:293px;" width="8" height="5" viewBox="0 0 8 5"><path d="M0 0 L8 0 L4 4.5 Z" fill="#555"/></svg>
<div style="left:1290px;top:287px;width:17px;height:17px;background:#f3f5f8;border:1px solid #a9b2bd"></div>
<svg style="left:1294px;top:293px;" width="8" height="5" viewBox="0 0 8 5"><path d="M0 0 L8 0 L4 4.5 Z" fill="#555"/></svg>
<div class="g" style="left:27px;top:309.0px;width:76px;">A01</div>
<div class="g" style="left:104px;top:309.0px;width:124px;"><span class="c">小张</span></div>
<div class="g" style="left:229px;top:309.0px;width:64px;"><span class="c">女</span></div>
<div class="g" style="left:294px;top:309.0px;width:90px;">26</div>
<div class="g" style="left:385px;top:309.0px;width:93px;"><span class="c">湖南</span></div>
<div class="g" style="left:479px;top:309.0px;width:145px;"><span class="c">湖南省长沙市</span></div>
<div class="g" style="left:625px;top:309.0px;width:106px;"><span class="c">技术员</span></div>
<div class="g" style="left:732px;top:309.0px;width:98px;">7</div>
<div class="g" style="left:831px;top:309.0px;width:94px;">57</div>
<div class="g" style="left:926px;top:309.0px;width:78px;"><span class="c">不及格</span></div>
<div class="g" style="left:1005px;top:309.0px;width:118px;">21</div>
<div class="g" style="left:1124px;top:309.0px;width:78px;">0</div>
<div class="g" style="left:1203px;top:309.0px;width:104px;">4100</div>
<div class="g" style="left:27px;top:331.0px;width:76px;">A02</div>
<div class="g" style="left:104px;top:331.0px;width:124px;"><span class="c">小</span>G</div>
<div class="g" style="left:229px;top:331.0px;width:64px;"><span class="c">男</span></div>
<div class="g" style="left:294px;top:331.0px;width:90px;">28</div>
<div class="g" style="left:385px;top:331.0px;width:93px;"><span class="c">吉林</span></div>
<div class="g" style="left:479px;top:331.0px;width:145px;"><span class="c">吉林省长春市</span></div>
<div class="g" style="left:625px;top:331.0px;width:106px;"><span class="c">工程师</span></div>
<div class="g" style="left:732px;top:331.0px;width:98px;">8</div>
<div class="g" style="left:831px;top:331.0px;width:94px;">91</div>
<div class="g" style="left:926px;top:331.0px;width:78px;"><span class="c">优秀</span></div>
<div class="g" style="left:1005px;top:331.0px;width:118px;">21</div>
<div class="g" style="left:1124px;top:331.0px;width:78px;">200</div>
<div class="g" style="left:1203px;top:331.0px;width:104px;">6200</div>
<div class="g" style="left:27px;top:354.0px;width:76px;">A03</div>
<div class="g" style="left:104px;top:354.0px;width:124px;"><span class="c">小</span>F</div>
<div class="g" style="left:229px;top:354.0px;width:64px;"><span class="c">女</span></div>
<div class="g" style="left:294px;top:354.0px;width:90px;">28</div>
<div class="g" style="left:385px;top:354.0px;width:93px;"><span class="c">辽宁</span></div>
<div class="g" style="left:479px;top:354.0px;width:145px;"><span class="c">辽宁省沈阳市</span></div>
<div class="g" style="left:625px;top:354.0px;width:106px;"><span class="c">工程师</span></div>
<div class="g" style="left:732px;top:354.0px;width:98px;">9</div>
<div class="g" style="left:831px;top:354.0px;width:94px;">90</div>
<div class="g" style="left:926px;top:354.0px;width:78px;"><span class="c">优秀</span></div>
<div class="g" style="left:1005px;top:354.0px;width:118px;">21</div>
<div class="g" style="left:1124px;top:354.0px;width:78px;">200</div>
<div class="g" style="left:1203px;top:354.0px;width:104px;">6100</div>
<div class="g" style="left:27px;top:378.0px;width:76px;">A04</div>
<div class="g" style="left:104px;top:378.0px;width:124px;"><span class="c">小</span>J</div>
<div class="g" style="left:229px;top:378.0px;width:64px;"><span class="c">男</span></div>
<div class="g" style="left:294px;top:378.0px;width:90px;">36</div>
<div class="g" style="left:385px;top:378.0px;width:93px;"><span class="c">江苏</span></div>
<div class="g" style="left:479px;top:378.0px;width:145px;"><span class="c">江苏省南京市</span></div>
<div class="g" style="left:625px;top:378.0px;width:106px;"><span class="c">助工</span></div>
<div class="g" style="left:732px;top:378.0px;width:98px;">10</div>
<div class="g" style="left:831px;top:378.0px;width:94px;">78</div>
<div class="g" style="left:926px;top:378.0px;width:78px;"><span class="c">及格</span></div>
<div class="g" style="left:1005px;top:378.0px;width:118px;">21</div>
<div class="g" style="left:1124px;top:378.0px;width:78px;">0</div>
<div class="g" style="left:1203px;top:378.0px;width:104px;">4900</div>
<div class="g" style="left:27px;top:402.0px;width:76px;">A05</div>
<div class="g" style="left:104px;top:402.0px;width:124px;"><span class="c">李四</span></div>
<div class="g" style="left:229px;top:402.0px;width:64px;"><span class="c">男</span></div>
<div class="g" style="left:294px;top:402.0px;width:90px;">23</div>
<div class="g" style="left:385px;top:402.0px;width:93px;"><span class="c">四川</span></div>
<div class="g" style="left:479px;top:402.0px;width:145px;"><span class="c">四川省成都市</span></div>
<div class="g" style="left:625px;top:402.0px;width:106px;"><span class="c">工人</span></div>
<div class="g" style="left:732px;top:402.0px;width:98px;">11</div>
<div class="g" style="left:831px;top:402.0px;width:94px;">66</div>
<div class="g" style="left:926px;top:402.0px;width:78px;"><span class="c">及格</span></div>
<div class="g" style="left:1005px;top:402.0px;width:118px;">22</div>
<div class="g" style="left:1124px;top:402.0px;width:78px;">0</div>
<div class="g" style="left:1203px;top:402.0px;width:104px;">3900</div>
<div class="g" style="left:27px;top:426.0px;width:76px;">A06</div>
<div class="g" style="left:104px;top:426.0px;width:124px;"><span class="c">小</span>A</div>
<div class="g" style="left:229px;top:426.0px;width:64px;"><span class="c">女</span></div>
<div class="g" style="left:294px;top:426.0px;width:90px;">23</div>
<div class="g" style="left:385px;top:426.0px;width:93px;"><span class="c">湖北</span></div>
<div class="g" style="left:479px;top:426.0px;width:145px;"><span class="c">湖北省武汉市</span></div>
<div class="g" style="left:625px;top:426.0px;width:106px;"><span class="c">工人</span></div>
<div class="g" style="left:732px;top:426.0px;width:98px;">12</div>
<div class="g" style="left:831px;top:426.0px;width:94px;">58</div>
<div class="g" style="left:926px;top:426.0px;width:78px;"><span class="c">不及格</span></div>
<div class="g" style="left:1005px;top:426.0px;width:118px;">22</div>
<div class="g" style="left:1124px;top:426.0px;width:78px;">0</div>
<div class="g" style="left:1203px;top:426.0px;width:104px;">4100</div>
<div class="g" style="left:27px;top:450.0px;width:76px;">A07</div>
<div class="g" style="left:104px;top:450.0px;width:124px;"><span class="c">小</span>N</div>
<div class="g" style="left:229px;top:450.0px;width:64px;"><span class="c">女</span></div>
<div class="g" style="left:294px;top:450.0px;width:90px;">24</div>
<div class="g" style="left:385px;top:450.0px;width:93px;"><span class="c">吉林</span></div>
<div class="g" style="left:479px;top:450.0px;width:145px;"><span class="c">吉林省长春市</span></div>
<div class="g" style="left:625px;top:450.0px;width:106px;"><span class="c">工人</span></div>
<div class="g" style="left:732px;top:450.0px;width:98px;">13</div>
<div class="g" style="left:831px;top:450.0px;width:94px;">65</div>
<div class="g" style="left:926px;top:450.0px;width:78px;"><span class="c">及格</span></div>
<div class="g" style="left:1005px;top:450.0px;width:118px;">22</div>
<div class="g" style="left:1124px;top:450.0px;width:78px;">0</div>
<div class="g" style="left:1203px;top:450.0px;width:104px;">4600</div>
<div class="g" style="left:27px;top:474.0px;width:76px;">A08</div>
<div class="g" style="left:104px;top:474.0px;width:124px;"><span class="c">王五</span></div>
<div class="g" style="left:229px;top:474.0px;width:64px;"><span class="c">女</span></div>
<div class="g" style="left:294px;top:474.0px;width:90px;">25</div>
<div class="g" style="left:385px;top:474.0px;width:93px;"><span class="c">四川</span></div>
<div class="g" style="left:479px;top:474.0px;width:145px;"><span class="c">四川省成都市</span></div>
<div class="g" style="left:625px;top:474.0px;width:106px;"><span class="c">技术员</span></div>
<div class="g" style="left:732px;top:474.0px;width:98px;">14</div>
<div class="g" style="left:831px;top:474.0px;width:94px;">64</div>
<div class="g" style="left:926px;top:474.0px;width:78px;"><span class="c">及格</span></div>
<div class="g" style="left:1005px;top:474.0px;width:118px;">22</div>
<div class="g" style="left:1124px;top:474.0px;width:78px;">0</div>
<div class="g" style="left:1203px;top:474.0px;width:104px;">4300</div>
<div class="g" style="left:27px;top:498.0px;width:76px;">A09</div>
<div class="g" style="left:104px;top:498.0px;width:124px;"><span class="c">小韦</span></div>
<div class="g" style="left:229px;top:498.0px;width:64px;"><span class="c">男</span></div>
<div class="g" style="left:294px;top:498.0px;width:90px;">36</div>
<div class="g" style="left:385px;top:498.0px;width:93px;"><span class="c">吉林</span></div>
<div class="g" style="left:479px;top:498.0px;width:145px;"><span class="c">吉林省长春市</span></div>
<div class="g" style="left:625px;top:498.0px;width:106px;"><span class="c">工人</span></div>
<div class="g" style="left:732px;top:498.0px;width:98px;">15</div>
<div class="g" style="left:831px;top:498.0px;width:94px;">80</div>
<div class="g" style="left:926px;top:498.0px;width:78px;"><span class="c">良好</span></div>
<div class="g" style="left:1005px;top:498.0px;width:118px;">22</div>
<div class="g" style="left:1124px;top:498.0px;width:78px;">200</div>
<div class="g" style="left:1203px;top:498.0px;width:104px;">5100</div>
<div class="g" style="left:27px;top:522.0px;width:76px;">A10</div>
<div class="g" style="left:104px;top:522.0px;width:124px;"><span class="c">小</span>E</div>
<div class="g" style="left:229px;top:522.0px;width:64px;"><span class="c">男</span></div>
<div class="g" style="left:294px;top:522.0px;width:90px;">36</div>
<div class="g" style="left:385px;top:522.0px;width:93px;"><span class="c">吉林</span></div>
<div class="g" style="left:479px;top:522.0px;width:145px;"><span class="c">吉林省长春市</span></div>
<div class="g" style="left:625px;top:522.0px;width:106px;"><span class="c">工人</span></div>
<div class="g" style="left:732px;top:522.0px;width:98px;">16</div>
<div class="g" style="left:831px;top:522.0px;width:94px;">79</div>
<div class="g" style="left:926px;top:522.0px;width:78px;"><span class="c">及格</span></div>
<div class="g" style="left:1005px;top:522.0px;width:118px;">22</div>
<div class="g" style="left:1124px;top:522.0px;width:78px;">0</div>
<div class="g" style="left:1203px;top:522.0px;width:104px;">4400</div>
<div class="g" style="left:27px;top:546.0px;width:76px;">A11</div>
<div class="g" style="left:104px;top:546.0px;width:124px;"><span class="c">小</span>D</div>
<div class="g" style="left:229px;top:546.0px;width:64px;"><span class="c">女</span></div>
<div class="g" style="left:294px;top:546.0px;width:90px;">28</div>
<div class="g" style="left:385px;top:546.0px;width:93px;"><span class="c">四川</span></div>
<div class="g" style="left:479px;top:546.0px;width:145px;"><span class="c">四川省成都市</span></div>
<div class="g" style="left:625px;top:546.0px;width:106px;"><span class="c">技术员</span></div>
<div class="g" style="left:732px;top:546.0px;width:98px;">17</div>
<div class="g" style="left:831px;top:546.0px;width:94px;">80</div>
<div class="g" style="left:926px;top:546.0px;width:78px;"><span class="c">良好</span></div>
<div class="g" style="left:1005px;top:546.0px;width:118px;">23</div>
<div class="g" style="left:1124px;top:546.0px;width:78px;">200</div>
<div class="g" style="left:1203px;top:546.0px;width:104px;">5100</div>
<div class="g" style="left:27px;top:570.0px;width:76px;">A12</div>
<div class="g" style="left:104px;top:570.0px;width:124px;"><span class="c">小明</span></div>
<div class="g" style="left:229px;top:570.0px;width:64px;"><span class="c">男</span></div>
<div class="g" style="left:294px;top:570.0px;width:90px;">33</div>
<div class="g" style="left:385px;top:570.0px;width:93px;"><span class="c">湖北</span></div>
<div class="g" style="left:479px;top:570.0px;width:145px;"><span class="c">湖北省武汉市</span></div>
<div class="g" style="left:625px;top:570.0px;width:106px;"><span class="c">技术员</span></div>
<div class="g" style="left:732px;top:570.0px;width:98px;">18</div>
<div class="g" style="left:831px;top:570.0px;width:94px;">87</div>
<div class="g" style="left:926px;top:570.0px;width:78px;"><span class="c">良好</span></div>
<div class="g" style="left:1005px;top:570.0px;width:118px;">23</div>
<div class="g" style="left:1124px;top:570.0px;width:78px;">200</div>
<div class="g" style="left:1203px;top:570.0px;width:104px;">5300</div>
<div class="g" style="left:27px;top:594.0px;width:76px;">A13</div>
<div class="g" style="left:104px;top:594.0px;width:124px;"><span class="c">小</span>C</div>
<div class="g" style="left:229px;top:594.0px;width:64px;"><span class="c">女</span></div>
<div class="g" style="left:294px;top:594.0px;width:90px;">33</div>
<div class="g" style="left:385px;top:594.0px;width:93px;"><span class="c">湖南</span></div>
<div class="g" style="left:479px;top:594.0px;width:145px;"><span class="c">湖南省长沙市</span></div>
<div class="g" style="left:625px;top:594.0px;width:106px;"><span class="c">工人</span></div>
<div class="g" style="left:732px;top:594.0px;width:98px;">19</div>
<div class="g" style="left:831px;top:594.0px;width:94px;">87</div>
<div class="g" style="left:926px;top:594.0px;width:78px;"><span class="c">良好</span></div>
<div class="g" style="left:1005px;top:594.0px;width:118px;">23</div>
<div class="g" style="left:1124px;top:594.0px;width:78px;">200</div>
<div class="g" style="left:1203px;top:594.0px;width:104px;">5000</div>
<div class="g" style="left:27px;top:618.0px;width:76px;">A14</div>
<div class="g" style="left:104px;top:618.0px;width:124px;"><span class="c">李六</span></div>
<div class="g" style="left:229px;top:618.0px;width:64px;"><span class="c">女</span></div>
<div class="g" style="left:294px;top:618.0px;width:90px;">36</div>
<div class="g" style="left:385px;top:618.0px;width:93px;"><span class="c">辽宁</span></div>
<div class="g" style="left:479px;top:618.0px;width:145px;"><span class="c">辽宁省沈阳市</span></div>
<div class="g" style="left:625px;top:618.0px;width:106px;"><span class="c">技术员</span></div>
<div class="g" style="left:732px;top:618.0px;width:98px;">20</div>
<div class="g" style="left:831px;top:618.0px;width:94px;">66</div>
<div class="g" style="left:926px;top:618.0px;width:78px;"><span class="c">及格</span></div>
<div class="g" style="left:1005px;top:618.0px;width:118px;">23</div>
<div class="g" style="left:1124px;top:618.0px;width:78px;">200</div>
<div class="g" style="left:1203px;top:618.0px;width:104px;">4300</div>
<div class="g" style="left:27px;top:642.0px;width:76px;">A15</div>
<div class="g" style="left:104px;top:642.0px;width:124px;"><span class="c">小</span>B</div>
<div class="g" style="left:229px;top:642.0px;width:64px;"><span class="c">男</span></div>
<div class="g" style="left:294px;top:642.0px;width:90px;">25</div>
<div class="g" style="left:385px;top:642.0px;width:93px;"><span class="c">江苏</span></div>
<div class="g" style="left:479px;top:642.0px;width:145px;"><span class="c">江苏省南京市</span></div>
<div class="g" style="left:625px;top:642.0px;width:106px;"><span class="c">技术员</span></div>
<div class="g" style="left:732px;top:642.0px;width:98px;">21</div>
<div class="g" style="left:831px;top:642.0px;width:94px;">66</div>
<div class="g" style="left:926px;top:642.0px;width:78px;"><span class="c">及格</span></div>
<div class="g" style="left:1005px;top:642.0px;width:118px;">24</div>
<div class="g" style="left:1124px;top:642.0px;width:78px;">200</div>
<div class="g" style="left:1203px;top:642.0px;width:104px;">4600</div>
<div class="g" style="left:27px;top:666.0px;width:76px;">A16</div>
<div class="g" style="left:104px;top:666.0px;width:124px;"><span class="c">小红</span></div>
<div class="g" style="left:229px;top:666.0px;width:64px;"><span class="c">男</span></div>
<div class="g" style="left:294px;top:666.0px;width:90px;">30</div>
<div class="g" style="left:385px;top:666.0px;width:93px;"><span class="c">四川</span></div>
<div class="g" style="left:479px;top:666.0px;width:145px;"><span class="c">四川省成都市</span></div>
<div class="g" style="left:625px;top:666.0px;width:106px;"><span class="c">工人</span></div>
<div class="g" style="left:732px;top:666.0px;width:98px;">22</div>
<div class="g" style="left:831px;top:666.0px;width:94px;">89</div>
<div class="g" style="left:926px;top:666.0px;width:78px;"><span class="c">良好</span></div>
<div class="g" style="left:1005px;top:666.0px;width:118px;">24</div>
<div class="g" style="left:1124px;top:666.0px;width:78px;">200</div>
<div class="g" style="left:1203px;top:666.0px;width:104px;">5400</div>
<div class="g" style="left:27px;top:690.0px;width:76px;">A17</div>
<div class="g" style="left:104px;top:690.0px;width:124px;"><span class="c">小王</span></div>
<div class="g" style="left:229px;top:690.0px;width:64px;"><span class="c">男</span></div>
<div class="g" style="left:294px;top:690.0px;width:90px;">25</div>
<div class="g" style="left:385px;top:690.0px;width:93px;"><span class="c">福建</span></div>
<div class="g" style="left:479px;top:690.0px;width:145px;"><span class="c">福建省厦门市</span></div>
<div class="g" style="left:625px;top:690.0px;width:106px;"><span class="c">技术员</span></div>
<div class="g" style="left:732px;top:690.0px;width:98px;">23</div>
<div class="g" style="left:831px;top:690.0px;width:94px;">66</div>
<div class="g" style="left:926px;top:690.0px;width:78px;"><span class="c">及格</span></div>
<div class="g" style="left:1005px;top:690.0px;width:118px;">25</div>
<div class="g" style="left:1124px;top:690.0px;width:78px;">200</div>
<div class="g" style="left:1203px;top:690.0px;width:104px;">4600</div>
<div class="g" style="left:27px;top:714.0px;width:76px;">A18</div>
<div class="g" style="left:104px;top:714.0px;width:124px;"><span class="c">小</span>H</div>
<div class="g" style="left:229px;top:714.0px;width:64px;"><span class="c">女</span></div>
<div class="g" style="left:294px;top:714.0px;width:90px;">30</div>
<div class="g" style="left:385px;top:714.0px;width:93px;"><span class="c">江苏</span></div>
<div class="g" style="left:479px;top:714.0px;width:145px;"><span class="c">江苏省南京市</span></div>
<div class="g" style="left:625px;top:714.0px;width:106px;"><span class="c">技术员</span></div>
<div class="g" style="left:732px;top:714.0px;width:98px;">24</div>
<div class="g" style="left:831px;top:714.0px;width:94px;">87</div>
<div class="g" style="left:926px;top:714.0px;width:78px;"><span class="c">良好</span></div>
<div class="g" style="left:1005px;top:714.0px;width:118px;">0</div>
<div class="g" style="left:1124px;top:714.0px;width:78px;">200</div>
<div class="g" style="left:1203px;top:714.0px;width:104px;">5900</div>
<div class="g" style="left:27px;top:738.0px;width:76px;">A19</div>
<div class="g" style="left:104px;top:738.0px;width:124px;"><span class="c">小李</span></div>
<div class="g" style="left:229px;top:738.0px;width:64px;"><span class="c">女</span></div>
<div class="g" style="left:294px;top:738.0px;width:90px;">26</div>
<div class="g" style="left:385px;top:738.0px;width:93px;"><span class="c">山东</span></div>
<div class="g" style="left:479px;top:738.0px;width:145px;"><span class="c">山东省青岛市</span></div>
<div class="g" style="left:625px;top:738.0px;width:106px;"><span class="c">助工</span></div>
<div class="g" style="left:732px;top:738.0px;width:98px;">25</div>
<div class="g" style="left:831px;top:738.0px;width:94px;">77</div>
<div class="g" style="left:926px;top:738.0px;width:78px;"><span class="c">及格</span></div>
<div class="g" style="left:1005px;top:738.0px;width:118px;">26</div>
<div class="g" style="left:1124px;top:738.0px;width:78px;">200</div>
<div class="g" style="left:1203px;top:738.0px;width:104px;">4900</div>
<div class="g" style="left:27px;top:762.0px;width:76px;">A20</div>
<div class="g" style="left:104px;top:762.0px;width:124px;"><span class="c">小</span>I</div>
<div class="g" style="left:229px;top:762.0px;width:64px;"><span class="c">女</span></div>
<div class="g" style="left:294px;top:762.0px;width:90px;">33</div>
<div class="g" style="left:385px;top:762.0px;width:93px;"><span class="c">山东</span></div>
<div class="g" style="left:479px;top:762.0px;width:145px;"><span class="c">山东省青岛市</span></div>
<div class="g" style="left:625px;top:762.0px;width:106px;"><span class="c">技术员</span></div>
<div class="g" style="left:732px;top:762.0px;width:98px;">26</div>
<div class="g" style="left:831px;top:762.0px;width:94px;">89</div>
<div class="g" style="left:926px;top:762.0px;width:78px;"><span class="c">良好</span></div>
<div class="g" style="left:1005px;top:762.0px;width:118px;">26</div>
<div class="g" style="left:1124px;top:762.0px;width:78px;">200</div>
<div class="g" style="left:1203px;top:762.0px;width:104px;">6000</div>
<div class="g" style="left:27px;top:786.0px;width:76px;">A21</div>
<div class="g" style="left:104px;top:786.0px;width:124px;"><span class="c">小</span>L</div>
<div class="g" style="left:229px;top:786.0px;width:64px;"><span class="c">男</span></div>
<div class="g" style="left:294px;top:786.0px;width:90px;">30</div>
<div class="g" style="left:385px;top:786.0px;width:93px;"><span class="c">福建</span></div>
<div class="g" style="left:479px;top:786.0px;width:145px;"><span class="c">福建省厦门市</span></div>
<div class="g" style="left:625px;top:786.0px;width:106px;"><span class="c">工程师</span></div>
<div class="g" style="left:732px;top:786.0px;width:98px;">27</div>
<div class="g" style="left:831px;top:786.0px;width:94px;">95</div>
<div class="g" style="left:926px;top:786.0px;width:78px;"><span class="c">优秀</span></div>
<div class="g" style="left:1005px;top:786.0px;width:118px;">28</div>
<div class="g" style="left:1124px;top:786.0px;width:78px;">200</div>
<div class="g" style="left:1203px;top:786.0px;width:104px;">10100</div>
<div class="g" style="left:27px;top:810.0px;width:76px;">A22</div>
<div class="g" style="left:104px;top:810.0px;width:124px;"><span class="c">小</span>K</div>
<div class="g" style="left:229px;top:810.0px;width:64px;"><span class="c">男</span></div>
<div class="g" style="left:294px;top:810.0px;width:90px;">26</div>
<div class="g" style="left:385px;top:810.0px;width:93px;"><span class="c">湖北</span></div>
<div class="g" style="left:479px;top:810.0px;width:145px;"><span class="c">湖北省武汉市</span></div>
<div class="g" style="left:625px;top:810.0px;width:106px;"><span class="c">技术员</span></div>
<div class="g" style="left:732px;top:810.0px;width:98px;">1</div>
<div class="g" style="left:831px;top:810.0px;width:94px;">66</div>
<div class="g" style="left:926px;top:810.0px;width:78px;"><span class="c">及格</span></div>
<div class="g" style="left:1005px;top:810.0px;width:118px;">20</div>
<div class="g" style="left:1124px;top:810.0px;width:78px;">0</div>
<div class="g" style="left:1203px;top:810.0px;width:104px;">4600</div>
<div class="g" style="left:27px;top:834.0px;width:76px;">A23</div>
<div class="g" style="left:104px;top:834.0px;width:124px;"><span class="c">赵七</span></div>
<div class="g" style="left:229px;top:834.0px;width:64px;"><span class="c">男</span></div>
<div class="g" style="left:294px;top:834.0px;width:90px;">23</div>
<div class="g" style="left:385px;top:834.0px;width:93px;"><span class="c">贵州</span></div>
<div class="g" style="left:479px;top:834.0px;width:145px;"><span class="c">贵州省贵阳市</span></div>
<div class="g" style="left:625px;top:834.0px;width:106px;"><span class="c">工人</span></div>
<div class="g" style="left:732px;top:834.0px;width:98px;">2</div>
<div class="g" style="left:831px;top:834.0px;width:94px;">64</div>
<div class="g" style="left:926px;top:834.0px;width:78px;"><span class="c">及格</span></div>
<div class="g" style="left:1005px;top:834.0px;width:118px;">21</div>
<div class="g" style="left:1124px;top:834.0px;width:78px;">0</div>
<div class="g" style="left:1203px;top:834.0px;width:104px;">4300</div>
<div class="g" style="left:27px;top:858.0px;width:76px;">A24</div>
<div class="g" style="left:104px;top:858.0px;width:124px;"><span class="c">赵六</span></div>
<div class="g" style="left:229px;top:858.0px;width:64px;"><span class="c">女</span></div>
<div class="g" style="left:294px;top:858.0px;width:90px;">23</div>
<div class="g" style="left:385px;top:858.0px;width:93px;"><span class="c">湖南</span></div>
<div class="g" style="left:479px;top:858.0px;width:145px;"><span class="c">湖南省长沙市</span></div>
<div class="g" style="left:625px;top:858.0px;width:106px;"><span class="c">工人</span></div>
<div class="g" style="left:732px;top:858.0px;width:98px;">3</div>
<div class="g" style="left:831px;top:858.0px;width:94px;">66</div>
<div class="g" style="left:926px;top:858.0px;width:78px;"><span class="c">及格</span></div>
<div class="g" style="left:1005px;top:858.0px;width:118px;">21</div>
<div class="g" style="left:1124px;top:858.0px;width:78px;">0</div>
<div class="g" style="left:1203px;top:858.0px;width:104px;">3900</div>
<div class="g" style="left:27px;top:882.0px;width:76px;">A25</div>
<div class="g" style="left:104px;top:882.0px;width:124px;"><span class="c">小</span>M</div>
<div class="g" style="left:229px;top:882.0px;width:64px;"><span class="c">男</span></div>
<div class="g" style="left:294px;top:882.0px;width:90px;">24</div>
<div class="g" style="left:385px;top:882.0px;width:93px;"><span class="c">山东</span></div>
<div class="g" style="left:479px;top:882.0px;width:145px;"><span class="c">山东省青岛市</span></div>
<div class="g" style="left:625px;top:882.0px;width:106px;"><span class="c">工人</span></div>
<div class="g" style="left:732px;top:882.0px;width:98px;">4</div>
<div class="g" style="left:831px;top:882.0px;width:94px;">64</div>
<div class="g" style="left:926px;top:882.0px;width:78px;"><span class="c">及格</span></div>
<div class="g" style="left:1005px;top:882.0px;width:118px;">21</div>
<div class="g" style="left:1124px;top:882.0px;width:78px;">0</div>
<div class="g" style="left:1203px;top:882.0px;width:104px;">4100</div>
<div class="g" style="left:27px;top:906.0px;width:76px;">A26</div>
<div class="g" style="left:104px;top:906.0px;width:124px;"><span class="c">张三</span></div>
<div class="g" style="left:229px;top:906.0px;width:64px;"><span class="c">男</span></div>
<div class="g" style="left:294px;top:906.0px;width:90px;">25</div>
<div class="g" style="left:385px;top:906.0px;width:93px;"><span class="c">吉林</span></div>
<div class="g" style="left:479px;top:906.0px;width:145px;"><span class="c">吉林省长春市</span></div>
<div class="g" style="left:625px;top:906.0px;width:106px;"><span class="c">工人</span></div>
<div class="g" style="left:732px;top:906.0px;width:98px;">5</div>
<div class="g" style="left:831px;top:906.0px;width:94px;">78</div>
<div class="g" style="left:926px;top:906.0px;width:78px;"><span class="c">及格</span></div>
<div class="g" style="left:1005px;top:906.0px;width:118px;">21</div>
<div class="g" style="left:1124px;top:906.0px;width:78px;">0</div>
<div class="g" style="left:1203px;top:906.0px;width:104px;">4300</div>
<div style="left:102px;top:564px;width:128px;height:27px;border:2px solid #1e6e42"></div>
<div style="left:225px;top:586px;width:7px;height:7px;background:#1e6e42;border:1px solid #fff"></div>
<div style="left:1303px;top:921px;width:3px;height:3px;background:#3b4fa8"></div>
<div style="left:1305px;top:919px;width:1px;height:5px;background:#3b4fa8"></div>
<div style="left:1px;top:989px;width:1651px;height:30px;background:#e6e6e6"></div>
<div style="left:1px;top:989px;width:1636px;height:1px;background:#ababab"></div>
<div style="left:101px;top:989px;width:70px;height:25px;background:#fff;border-left:1px solid #ababab;border-right:1px solid #ababab"></div>
<div style="left:101px;top:1012px;width:70px;height:2px;background:#1e6e42"></div>
<div class="t" style="left:114px;top:994px;font-size:14px;letter-spacing:-0.5px;line-height:16px;color:#1e6e42">Sheet1</div>
<div class="t" style="left:104.0px;top:994px;width:200px;text-align:center;font-size:14px;letter-spacing:-0.5px;line-height:16px;color:#262626">Sheet2</div>
<div class="t" style="left:173.0px;top:994px;width:200px;text-align:center;font-size:14px;letter-spacing:-0.5px;line-height:16px;color:#262626">Sheet4</div>
<div class="t" style="left:240.0px;top:994px;width:200px;text-align:center;font-size:14px;letter-spacing:-0.5px;line-height:16px;color:#262626">成绩表</div>
<div class="t" style="left:305.0px;top:994px;width:200px;text-align:center;font-size:14px;letter-spacing:-0.5px;line-height:16px;color:#262626">Sheet3</div>
<div class="t" style="left:374.0px;top:994px;width:200px;text-align:center;font-size:14px;letter-spacing:-0.5px;line-height:16px;color:#262626">Sheet5</div>
<div class="t" style="left:443.0px;top:994px;width:200px;text-align:center;font-size:14px;letter-spacing:-0.5px;line-height:16px;color:#262626">Sheet6</div>
<div class="t" style="left:512.0px;top:994px;width:200px;text-align:center;font-size:14px;letter-spacing:-0.5px;line-height:16px;color:#262626">Sheet7</div>
<div class="t" style="left:581.0px;top:994px;width:200px;text-align:center;font-size:14px;letter-spacing:-0.5px;line-height:16px;color:#262626">Sheet8</div>
<div class="t" style="left:650.0px;top:994px;width:200px;text-align:center;font-size:14px;letter-spacing:-0.5px;line-height:16px;color:#262626">Sheet9</div>
<div style="left:239px;top:993px;width:1px;height:19px;background:#a6a6a6"></div>
<div style="left:308px;top:993px;width:1px;height:19px;background:#a6a6a6"></div>
<div style="left:371px;top:993px;width:1px;height:19px;background:#a6a6a6"></div>
<div style="left:440px;top:993px;width:1px;height:19px;background:#a6a6a6"></div>
<div style="left:509px;top:993px;width:1px;height:19px;background:#a6a6a6"></div>
<div style="left:578px;top:993px;width:1px;height:19px;background:#a6a6a6"></div>
<div style="left:647px;top:993px;width:1px;height:19px;background:#a6a6a6"></div>
<div style="left:716px;top:993px;width:1px;height:19px;background:#a6a6a6"></div>
<div style="left:784px;top:993px;width:1px;height:19px;background:#a6a6a6"></div>
<div style="left:1px;top:1017px;width:1651px;height:2px;background:#f7f7f7;border-top:1px solid #c8c8c8"></div>
<div style="left:1339px;top:1018px;width:40px;height:1px;background:#c4c4c4"></div>
<svg style="left:733px;top:40px;" width="13" height="17" viewBox="0 0 13 17"><path d="M6.5 1 A5 5 0 0 1 9.5 10 V12.5 H3.5 V10 A5 5 0 0 1 6.5 1 Z" fill="none" stroke="#fff" stroke-width="1.1"/><path d="M4 14.5 H9 M5 16.3 H8" stroke="#fff" stroke-width="1"/></svg>
<svg style="left:1383px;top:8px;" width="16" height="15" viewBox="0 0 16 15"><path d="M8 1 L15.3 14.3 H0.7 Z" fill="#f6d080" stroke="#d47a17" stroke-width="1.2" stroke-linejoin="round"/><path d="M8 5 V10" stroke="#333" stroke-width="1.5"/><circle cx="8" cy="12" r="0.9" fill="#333"/></svg>
<div class="t" style="left:1408px;top:8px;color:#fff;font-size:14px;line-height:16px">bo</div>
<svg style="left:1435px;top:4px;" width="24" height="24" viewBox="0 0 24 24"><rect width="24" height="24" fill="#b3b3b3"/><circle cx="12" cy="8.5" r="4.5" fill="#fff"/><path d="M3 24 Q3 14.5 12 14.5 Q21 14.5 21 24 Z" fill="#fff"/></svg>
<svg style="left:1487px;top:11px;" width="14" height="11" viewBox="0 0 14 11"><rect x="0.5" y="0.5" width="13" height="10" fill="none" stroke="#fff"/><path d="M0.5 2.8 H13.5" stroke="#fff"/><path d="M7 9.5 V4.5 M4.8 6.7 L7 4.5 L9.2 6.7" stroke="#fff" fill="none"/></svg>
<div style="left:1535px;top:15px;width:10px;height:1px;background:#fff"></div>
<div style="left:1581px;top:11px;width:10px;height:10px;border:1px solid #fff"></div>
<svg style="left:1627px;top:11px;" width="11" height="11" viewBox="0 0 11 11"><path d="M0.5 0.5 L10.5 10.5 M10.5 0.5 L0.5 10.5" stroke="#fff" stroke-width="1.1"/></svg>
<svg style="left:1623px;top:41px;" width="18" height="17" viewBox="0 0 18 17"><path d="M0.5 0.5 H16.5 V11.5 H5.5 L3 15.5 V11.5 H0.5 Z" fill="none" stroke="#fff" stroke-width="1"/></svg>
<svg style="left:9px;top:169px;" width="15" height="15" viewBox="0 0 15 15"><rect x="0.5" y="0.5" width="14" height="14" rx="1" fill="#7e4fa6"/><rect x="3" y="0.5" width="9" height="5" fill="#fff"/><rect x="4" y="9" width="7" height="5.5" fill="#fff"/><rect x="6" y="10.5" width="3" height="4" fill="#7e4fa6"/></svg>
<svg style="left:37px;top:169px;" width="17" height="15" viewBox="0 0 17 15"><path d="M3 13.5 Q0.5 9.5 3 7 Q6 4 14 5.5" stroke="#3f7fc1" stroke-width="2.2" fill="none" stroke-linecap="round"/><path d="M10 1.5 L14.5 5.5 L10 9.5" stroke="#3f7fc1" stroke-width="2.2" fill="none" stroke-linecap="round" stroke-linejoin="round"/></svg>
<svg style="left:59px;top:174px;" width="7" height="5" viewBox="0 0 7 5"><path d="M0.5 0.8 L3.5 3.8 L6.5 0.8" stroke="#666" stroke-width="1.1" fill="none"/></svg>
<svg style="left:76px;top:169px;" width="17" height="15" viewBox="0 0 17 15"><path d="M14 13.5 Q16.5 9.5 14 7 Q11 4 3 5.5" stroke="#3f7fc1" stroke-width="2.2" fill="none" stroke-linecap="round"/><path d="M7 1.5 L2.5 5.5 L7 9.5" stroke="#3f7fc1" stroke-width="2.2" fill="none" stroke-linecap="round" stroke-linejoin="round"/></svg>
<svg style="left:98px;top:174px;" width="7" height="5" viewBox="0 0 7 5"><path d="M0.5 0.8 L3.5 3.8 L6.5 0.8" stroke="#666" stroke-width="1.1" fill="none"/></svg>
<svg style="left:115px;top:168px;" width="17" height="17" viewBox="0 0 17 17"><path d="M0.5 0.5 H8 L10 2.5 V14.5 H0.5 Z" fill="#fff" stroke="#777"/><path d="M3.5 3 H2.5 V12 H3.5" stroke="#3f7fc1" stroke-width="1.2" fill="none"/><rect x="6.5" y="9.5" width="10" height="4.5" rx="1" fill="#777"/><rect x="8.5" y="6.5" width="5.5" height="3" fill="#fff" stroke="#777"/><rect x="8.5" y="12.5" width="5.5" height="4" fill="#fff" stroke="#777"/></svg>
<svg style="left:149px;top:173px;" width="7" height="8" viewBox="0 0 7 8"><path d="M0 0.5 H7" stroke="#444"/><path d="M0 3 H7 L3.5 7 Z" fill="#444"/></svg>
<svg style="left:94px;top:214px;" width="7" height="4" viewBox="0 0 7 4"><path d="M0 0 H7 L3.5 4 Z" fill="#666"/></svg>
<svg style="left:121px;top:211px;" width="4" height="12" viewBox="0 0 4 12"><circle cx="2" cy="1.5" r="1" fill="#aaa"/><circle cx="2" cy="6" r="1" fill="#aaa"/><circle cx="2" cy="10.5" r="1" fill="#aaa"/></svg>
<svg style="left:151px;top:212px;" width="12" height="11" viewBox="0 0 12 11"><path d="M0.8 0.8 L11.2 10.2 M11.2 0.8 L0.8 10.2" stroke="#c4c4c4" stroke-width="1.8"/></svg>
<svg style="left:186px;top:211px;" width="14" height="12" viewBox="0 0 14 12"><path d="M1 6.5 L5 10.5 L13 1.5" stroke="#c4c4c4" stroke-width="2.4" fill="none"/></svg>
<div class="t" style="left:222px;top:208px;font-size:14px;line-height:16px;font-family:'Liberation Serif',serif;font-style:italic;font-weight:bold;color:#666">f<span style="font-size:11px">x</span></div>
<svg style="left:1638px;top:213px;" width="8" height="5" viewBox="0 0 8 5"><path d="M0.5 0.5 L4 4 L7.5 0.5" stroke="#555" stroke-width="1.3" fill="none"/></svg>
<div style="left:1634px;top:241px;width:18px;height:778px;background:#f0f0f0"></div>
<div style="left:1637px;top:243px;width:15px;height:15px;background:#fff;border:1px solid #a6a6a6"></div>
<svg style="left:1640px;top:248px;" width="9" height="5" viewBox="0 0 9 5"><path d="M0 5 L4.5 0 L9 5 Z" fill="#222"/></svg>
<div style="left:1637px;top:258px;width:15px;height:482px;background:#fff;border:1px solid #a6a6a6"></div>
<div style="left:783px;top:993px;width:1px;height:19px;background:#a6a6a6"></div>
<svg style="left:817px;top:994px;" width="17" height="17" viewBox="0 0 17 17"><circle cx="8.5" cy="8.5" r="7.6" fill="none" stroke="#888" stroke-width="1.2"/><path d="M8.5 4.5 V12.5 M4.5 8.5 H12.5" stroke="#666" stroke-width="1.6"/></svg>
<svg style="left:992px;top:997px;" width="3" height="11" viewBox="0 0 3 11"><circle cx="1.5" cy="1.5" r="1" fill="#999"/><circle cx="1.5" cy="5.5" r="1" fill="#999"/><circle cx="1.5" cy="9.5" r="1" fill="#999"/></svg>
<div style="left:1142px;top:996px;width:495px;height:15px;background:#f0f0f0"></div>
<div style="left:1009px;top:996px;width:133px;height:15px;background:#fff;border:1px solid #9a9a9a"></div>
<div style="left:1024px;top:996px;width:1px;height:15px;background:#9a9a9a"></div>
<svg style="left:1013px;top:999px;" width="6" height="8" viewBox="0 0 6 8"><path d="M6 0 L0 4 L6 8 Z" fill="#222"/></svg>
<svg style="left:26px;top:998px;" width="8" height="10" viewBox="0 0 8 10"><path d="M6 1 L2 5 L6 9" fill="#bbb"/></svg>
<svg style="left:55px;top:998px;" width="8" height="10" viewBox="0 0 8 10"><path d="M2 1 L6 5 L2 9" fill="#bbb"/></svg>
<div style="left:1428px;top:137px;width:145px;height:156px;background:#fff;border:1px solid #c6c6c6;box-shadow:2px 2px 4px rgba(0,0,0,0.18)"></div>
<svg style="left:1435px;top:143px;" width="8" height="15" viewBox="0 0 8 15"><path d="M0.7 6.5 L3.8 0.5 L7 6.5 M1.8 4.5 H5.8" stroke="#3f7fc1" stroke-width="1.3" fill="none"/><path d="M0.8 8.5 H6.8 L0.8 14 H7" stroke="#8e5cc0" stroke-width="1.3" fill="none"/></svg>
<svg style="left:1443px;top:143px;" width="7" height="15" viewBox="0 0 7 15"><path d="M3.5 0.5 V13.5 M0.8 10.5 L3.5 13.8 L6.2 10.5" stroke="#555" stroke-width="1.1" fill="none"/></svg>
<div class="t" style="left:1461px;top:144px;font-size:12px;color:#262626">升序(<u>S</u>)</div>
<svg style="left:1435px;top:167px;" width="8" height="16" viewBox="0 0 8 16"><path d="M0.8 0.8 H6.8 L0.8 6.3 H7" stroke="#8e5cc0" stroke-width="1.3" fill="none"/><path d="M0.7 15 L3.8 8.5 L7 15 M1.8 13 H5.8" stroke="#3f7fc1" stroke-width="1.3" fill="none"/></svg>
<svg style="left:1443px;top:168px;" width="7" height="15" viewBox="0 0 7 15"><path d="M3.5 0.5 V13.5 M0.8 10.5 L3.5 13.8 L6.2 10.5" stroke="#555" stroke-width="1.1" fill="none"/></svg>
<div class="t" style="left:1461px;top:169px;font-size:12px;color:#262626">降序(<u>O</u>)</div>
<svg style="left:1433px;top:192px;" width="17" height="17" viewBox="0 0 17 17"><rect x="0.5" y="0.5" width="15" height="15" fill="#fff" stroke="#777"/><rect x="0.5" y="0.5" width="15" height="2.5" fill="#3f7fc1"/><path d="M5 5 V13 M3 11 L5 13 L7 11" stroke="#3f7fc1" stroke-width="1.2" fill="none"/><path d="M11 13 V5 M9 7 L11 5 L13 7" stroke="#8e5cc0" stroke-width="1.2" fill="none"/></svg>
<div class="t" style="left:1461px;top:194px;font-size:12px;color:#262626">自定义排序(<u>U</u>)...</div>
<div style="left:1462px;top:214px;width:108px;height:1px;background:#e1e1e1"></div>
<div style="left:1430px;top:216px;width:141px;height:25px;background:#c6c6c6"></div>
<div style="left:1431px;top:217px;width:21px;height:21px;background:#c6c6c6;border:1px solid #8d8d8d"></div>
<svg style="left:1434px;top:221px;" width="15" height="14" viewBox="0 0 15 14"><path d="M0.5 0.5 H14.5 L9 6.5 V13.5 H6 V6.5 Z" fill="#6b6b6b"/></svg>
<div class="t" style="left:1461px;top:221px;font-size:12px;color:#262626">筛选(<u>F</u>)</div>
<svg style="left:1434px;top:245px;" width="17" height="17" viewBox="0 0 17 17"><path d="M0.5 0.5 H13 L8.5 5.5 V10 H5 V5.5 Z" fill="#c0c0c0"/><path d="M8 9 L15.5 16 M15.5 9 L8 16" stroke="#c0c0c0" stroke-width="1.3"/></svg>
<div class="t" style="left:1461px;top:246px;font-size:12px;color:#a6a6a6">清除(<u>C</u>)</div>
<svg style="left:1434px;top:270px;" width="17" height="17" viewBox="0 0 17 17"><path d="M0.5 0.5 H13 L8.5 5.5 V12 H5 V5.5 Z" fill="#6b6b6b"/><path d="M15 9.5 A4 4 0 0 0 8.5 11 M8.5 13.5 A4 4 0 0 0 15 15" stroke="#3a9a6a" stroke-width="1.5" fill="none"/><path d="M14 7.5 L16 10 L13 10.5 Z M9.5 16.5 L7.5 14 L10.5 13.5 Z" fill="#3a9a6a"/></svg>
<div class="t" style="left:1461px;top:271px;font-size:12px;color:#262626">重新应用(<u>Y</u>)</div>
<svg style="left:1537px;top:226px;" width="14" height="21" viewBox="0 0 14 21"><path d="M1 1 V17 L5 13 L8 20 L10.5 19 L7.5 12 H13 Z" fill="#fff" stroke="#000" stroke-width="1.1" stroke-linejoin="round"/></svg>
<svg style="left:0;top:0" width="1652" height="1019" viewBox="0 0 1652 1019"><defs><filter id="sh" x="-20%" y="-20%" width="140%" height="140%"><feDropShadow dx="1.5" dy="2" stdDeviation="1.8" flood-color="#000" flood-opacity="0.45"/></filter></defs><g filter="url(#sh)"><line x1="1323" y1="194" x2="1422.0913779194887" y2="126.75942212606132" stroke="#ff0000" stroke-width="4" stroke-linecap="round"/><polygon points="1435,118 1418.2583919216809,139.63258095909882 1418.2187912953352,129.3872487638797 1408.7128678099475,125.56549279443894" fill="#ff0000"/><line x1="1372" y1="222" x2="1421.4018458261912" y2="221.239971602674" stroke="#ff0000" stroke-width="4" stroke-linecap="round"/><polygon points="1437,221 1411.103064544766,227.899183576877 1416.7223995740485,221.31196308347617 1410.9030882092045,214.90072176536964" fill="#ff0000"/><line x1="1267" y1="243" x2="1281.1487728672887" y2="265.3236194128332" stroke="#ff0000" stroke-width="4.5" stroke-linecap="round"/><polygon points="1289.5,278.5 1268.8241698623187,260.822046268933 1278.6434047274752,261.3707052366832 1282.338406361977,252.25668510717773" fill="#ff0000"/></g></svg>
<div style="left:1500px;top:978px;width:136px;height:41px;background:rgba(255,255,255,0.92);filter:blur(5px)"></div>
<svg style="left:1488px;top:969px;" width="66" height="42" viewBox="0 0 66 42"><path d="M2 23.5 L40 2.5 L54 13.5 L49.5 14 L40 8 L14 22 Z" fill="#139de6"/><path d="M14 21 H21.5 V38.5 H14 Z" fill="#139de6"/><path d="M21.5 22 L50 15.5 V19.5 L21.5 26 Z M21.5 30 L48 24.5 V28.5 L21.5 34 Z M21.5 35 L47 32 V36 L21.5 38.5 Z" fill="#139de6"/><rect x="15.5" y="27.5" width="6" height="3.5" fill="#fff"/><rect x="15.5" y="33" width="6" height="3" fill="#fff"/><path d="M50 18 h3 v3 h-3z M54 22 h3 v3 h-3z M49 26 h3.5 v3.5 h-3.5z M53.5 29 h3 v3 h-3z M46 31 h3.5 v3.5 h-3.5z M52 34 h2.5 v2.5 h-2.5z" fill="#139de6"/></svg>
<div class="t" style="left:1559px;top:972px;font-size:17.5px;line-height:20px;font-weight:bold;color:#2e3033">系统之家</div>
<div class="t" style="left:1557px;top:996px;font-size:7.5px;line-height:9px;font-weight:bold;color:#2e3033;letter-spacing:0.7px">XITONGZHIJIA.NET</div>
<div class="t" style="left:1557px;top:1005px;font-size:7.5px;line-height:9px;font-weight:bold;color:#2e3033;letter-spacing:0.7px;opacity:0.12;transform:scaleY(-1)">XITONGZHIJIA.NET</div>
<div style="left:0px;top:0px;width:1px;height:1019px;background:#217346"></div></body></html>
